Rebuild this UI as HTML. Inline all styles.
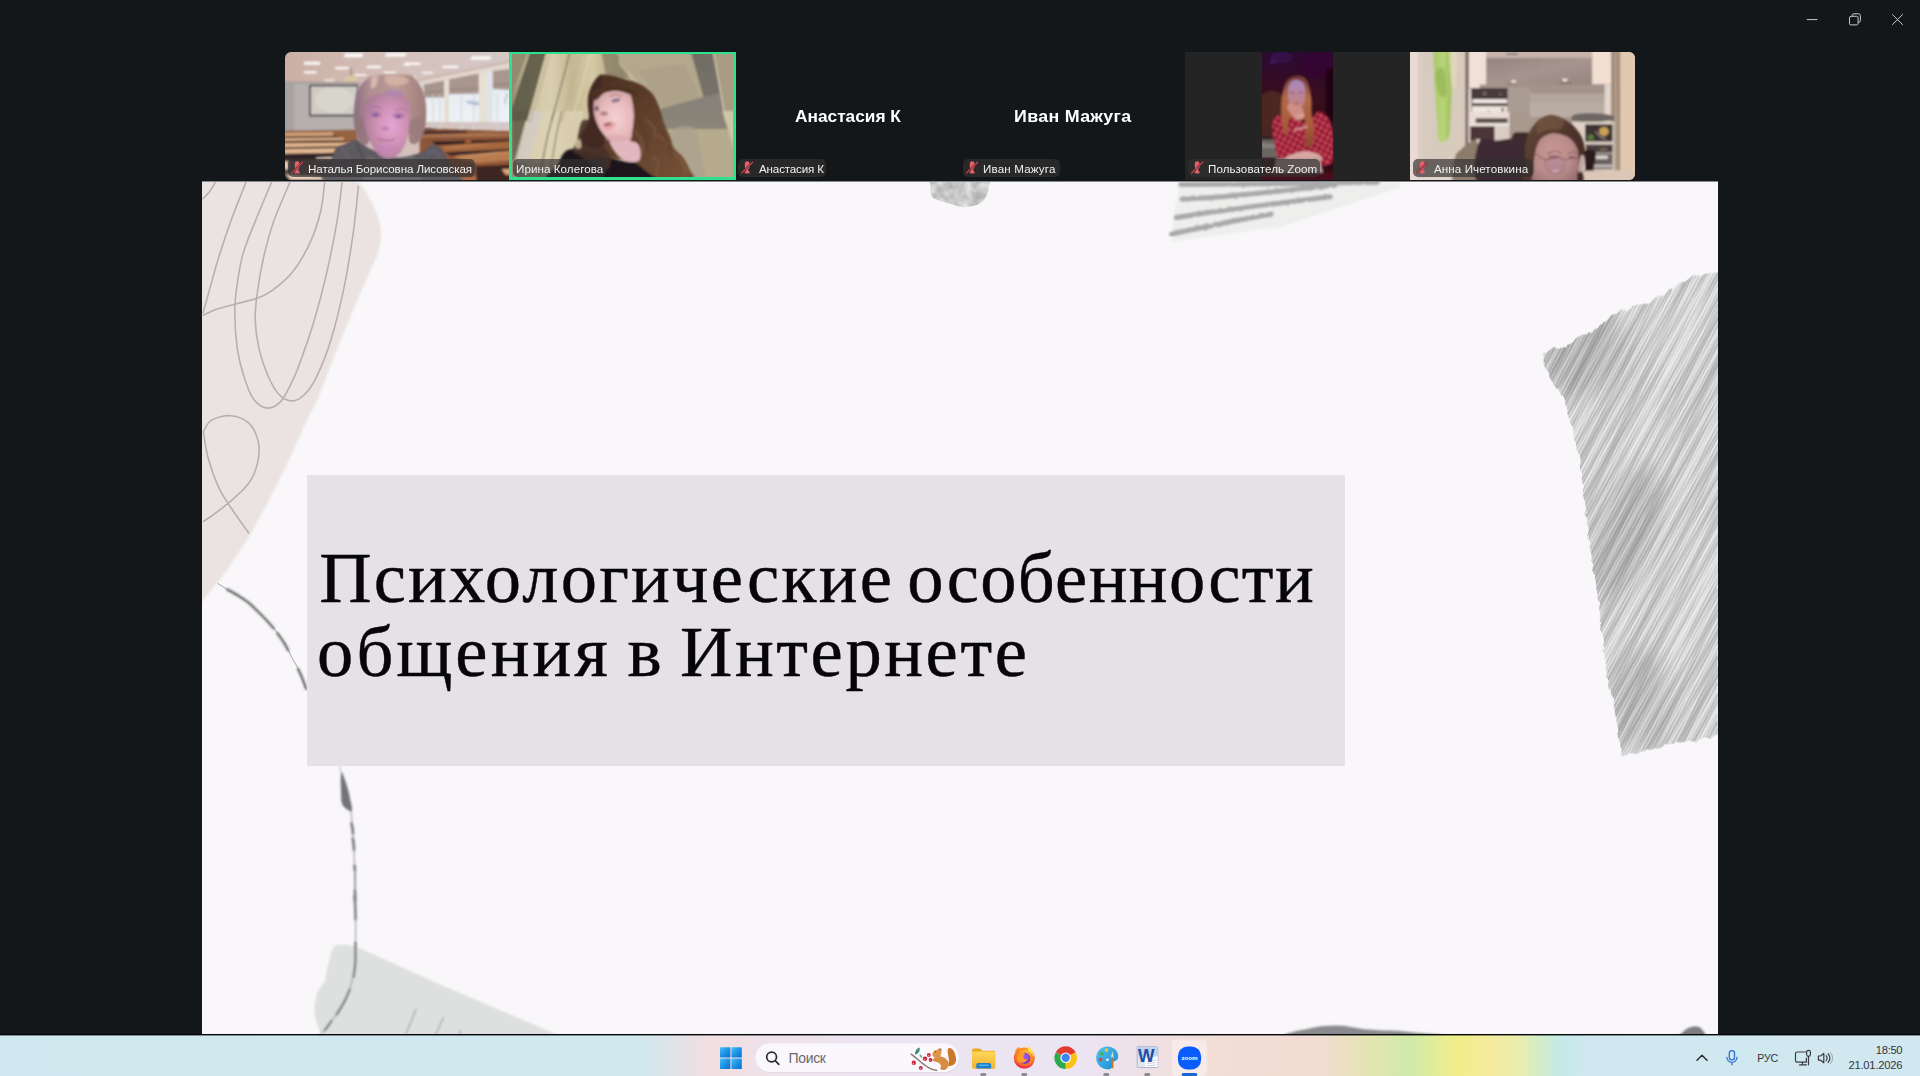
<!DOCTYPE html>
<html lang="ru">
<head>
<meta charset="utf-8">
<title>Zoom</title>
<style>
*{box-sizing:border-box;margin:0;padding:0}
html,body{width:1920px;height:1076px;overflow:hidden;background:#13171a}
body{position:relative;font-family:"Liberation Sans","DejaVu Sans",sans-serif;color:#fff}
.t{position:absolute;white-space:nowrap}
svg{display:block}
/* window controls */
#winctl{position:absolute;left:1780px;top:0;width:140px;height:40px}
/* gallery strip */
.tile{position:absolute;top:52px;width:225px;height:128px;overflow:hidden;background:#13171a}
.tile svg.pic{position:absolute;left:0;top:0;width:225px;height:128px}
.pw{position:absolute;overflow:hidden}
.tag{position:absolute;top:106.8px;height:18px;border-radius:5px;background:rgba(50,48,49,.68)}
.tag svg{position:absolute;left:2.6px;top:2.5px;width:12.6px;height:12.8px}
/* slide */
#slide{position:absolute;left:202px;top:181.5px;width:1515.5px;height:852.5px;background:#f9f7f9;overflow:hidden;box-shadow:0 -1px 0 rgba(249,247,249,.5)}
#slide>svg.deco{position:absolute;left:-12px;top:-12px;width:1539.5px;height:876.5px}
#titlebox{position:absolute;left:105px;top:293.5px;width:1037.5px;height:290.6px;background:#e5e1e6}
/* taskbar */
#sep{position:absolute;left:0;top:1034px;width:1920px;height:1.45px;background:#05060a;z-index:3;box-shadow:0 1px 0 rgba(5,6,10,.42)}
#taskbar{position:absolute;left:0;top:1035px;width:1920px;height:41px;
  background:linear-gradient(90deg,#cfe8ef 0px,#d0e8ee 640px,#e4e2e6 680px,#f1dfe1 705px,#efe2ea 780px,#ece4f0 860px,#ebe4f2 1080px,#efe0e4 1150px,#f2ddd7 1210px,#f1dcd3 1320px,#ebe1bd 1350px,#dfe7ae 1380px,#cfe9aa 1410px,#e2ec98 1435px,#f1ee8a 1457px,#f5eb9c 1490px,#e9edb0 1520px,#d3ecc8 1540px,#c4eae8 1560px,#cfe8ef 1585px,#d2e8f1 1920px)}

.tile .t{will-change:transform}

</style>
</head>
<body>
<svg id="winctl" viewBox="1780 0 140 40" fill="none" stroke="#c9cbcc" stroke-width="1">
<path d="M1806.8 19.6h10.6"/>
<path d="M1852 16.2v-0.4a2 2 0 0 1 2-2h4.4a2 2 0 0 1 2 2v4.6a2 2 0 0 1 -2 2h-0.4" stroke-width="1"/>
<rect x="1849.5" y="16.3" width="8.6" height="8.6" rx="1.6"/>
<path d="M1892.2 14.3l10.6 10.6M1902.8 14.3l-10.6 10.6"/>
</svg>
<svg width="0" height="0" style="position:absolute"><defs>
<symbol id="mute" viewBox="0 0 13 13">
<path d="M3.900 2.700a2.500 2.500 0 0 1 5 0v3.200a2.500 2.500 0 0 1 -1.600 2.350l.5 1.950l1.100.9v1.600h-5v-1.600l1.100-.9l.5-1.950a2.500 2.500 0 0 1 -1.600-2.350z" fill="#e6606b"/>
<path d="M.500 12.400L12.500 .700" stroke="#7c2027" stroke-width="2" stroke-linecap="round" fill="none"/>
<path d="M.500 12.400L12.500 .700" stroke="#d67683" stroke-width=".85" stroke-linecap="round" fill="none"/>
</symbol>
</defs></svg>
<!-- tile 1 -->
<div class="tile" style="left:285px;border-radius:6px 0 0 6px">
<svg class="pic" style="left:-8px;top:-8px;width:241px;height:144px" viewBox="277 44 241 144"><defs><linearGradient id="p1ceil" x1="0" y1="0" x2="1" y2="0"><stop offset="0" stop-color="#cbaea3"/><stop offset=".45" stop-color="#d3bfb8"/><stop offset="1" stop-color="#d6c9c8"/></linearGradient><linearGradient id="p1win" x1="0" y1="0" x2="0" y2="1"><stop offset="0" stop-color="#dfe6ee"/><stop offset="1" stop-color="#eef2f6"/></linearGradient><radialGradient id="p1face" cx=".6" cy=".5" r=".62"><stop offset="0" stop-color="#e6a4d6"/><stop offset=".45" stop-color="#d294b8"/><stop offset="1" stop-color="#ab7c98"/></radialGradient><linearGradient id="p1hair" x1="0" y1="0" x2="1" y2="0"><stop offset="0" stop-color="#8a6c80"/><stop offset=".22" stop-color="#b08e92"/><stop offset=".6" stop-color="#bd9a94"/><stop offset="1" stop-color="#9c7c7a"/></linearGradient><filter id="p1b" x="-5%" y="-5%" width="110%" height="110%"><feGaussianBlur stdDeviation=".8"/></filter><filter id="p1p" x="-5%" y="-5%" width="110%" height="110%"><feGaussianBlur stdDeviation=".8"/></filter><filter id="p1b2" x="-20%" y="-20%" width="140%" height="140%"><feGaussianBlur stdDeviation="1.1"/></filter></defs>
<rect x="275" y="42" width="245" height="148" fill="url(#p1ceil)"/>
<g filter="url(#p1b)">
<path d="M302.6 52L303.5 81.3" fill="none" stroke="#bba59d" stroke-width="0.5" opacity="0.5"/>
<path d="M324 52L313.6 81.3" fill="none" stroke="#bba59d" stroke-width="0.5" opacity="0.5"/>
<path d="M344.8 52L330.5 71.5" fill="none" stroke="#bba59d" stroke-width="0.5" opacity="0.5"/>
<path d="M365.7 52L350 68.3" fill="none" stroke="#bba59d" stroke-width="0.5" opacity="0.5"/>
<path d="M386.5 52L366.3 73.5" fill="none" stroke="#bba59d" stroke-width="0.5" opacity="0.5"/>
<path d="M345.5 53.6L363.7 53.6L361.7 57.2L343.5 57.2z" fill="#fdfbfa" opacity="1"/>
<path d="M386.5 53.3L407 53.3L405 56.6L384.5 56.6z" fill="#fdfbfa" opacity="1"/>
<path d="M303.9 61.8L320.1 61.8L320.1 64.7L303.9 64.7z" fill="#fdfbfa" opacity="1"/>
<path d="M335.7 67L349.4 67L348.4 69.2L334.8 69.2z" fill="#fdfbfa" opacity="1"/>
<path d="M367.9 65.7L381.9 65.7L380 68.3L366 68.3z" fill="#fdfbfa" opacity="1"/>
<path d="M405.3 63.7L410.5 63.7L408.6 65.7L403.4 65.7z" fill="#fdfbfa" opacity="1"/>
<path d="M303.9 71.2L316.5 71.2L316.5 73.5L303.9 73.5z" fill="#fdfbfa" opacity="1"/>
<path d="M354.9 74.1L366.3 74.1L365.7 75.7L354.3 75.7z" fill="#fdfbfa" opacity="1"/>
<path d="M384.5 71.8L396.2 71.8L395.6 73.8L383.9 73.8z" fill="#fdfbfa" opacity="1"/>
<path d="M325 79.6L334.8 79.6L334.4 80.9L324.7 80.9z" fill="#fdfbfa" opacity="0.85"/>
<path d="M471.7 56.2L491.3 56.2L490 59.8L470.4 59.8z" fill="#fdfbfa" opacity="0.95"/>
<path d="M404.8 62.4L421 62.4L419.7 65L403.5 65z" fill="#fdfbfa" opacity="0.95"/>
<path d="M443.1 65.7L458.7 65.7L457.4 67.9L441.8 67.9z" fill="#fdfbfa" opacity="0.95"/>
<path d="M422.6 71.8L433.4 71.8L432.7 73.8L422 73.8z" fill="#fdfbfa" opacity="0.9"/>
<path d="M406.7 76.7L416.5 76.7L415.8 78L406.1 78z" fill="#fdfbfa" opacity="0.85"/>
<path d="M350 67.6L351.3 71.5L350.7 76.1" fill="none" stroke="#6a5a4a" stroke-width="0.8"/>
<path d="M345.5 78C346.4 77.1 348.8 75.8 350.7 75.7C352.5 75.7 355.5 76.9 356.5 77.7C357.6 78.5 358.7 80.1 356.9 80.6C355 81.2 347.4 81.4 345.5 80.9C343.6 80.5 344.6 78.9 345.5 78z" fill="#d8caa0"/>
<path d="M278.5 82.6L359.8 82.6L359.8 133.3L278.5 133.3z" fill="#b5afae"/>
<path d="M278.5 82.6L294.1 82.6L294.1 133.3L278.5 133.3z" fill="#a6a2a4"/>
<path d="M278.5 81.6L359.8 82L359.8 83.2L278.5 83.2z" fill="#a89a96"/>
<rect x="309.4" y="84.8" width="48.5" height="31.5" fill="#2c282b"/>
<rect x="310.9" y="86.3" width="46" height="28.4" fill="#cfcbc4"/>
<ellipse cx="334.4" cy="100.1" rx="19.5" ry="13" fill="#dcd8d2" opacity="0.7"/>
<path d="M414.5 82.6L518.6 60.5L518.6 122L414.5 122z" fill="url(#p1win)"/>
<path d="M414.5 80.6L518.6 58.8L518.6 69.6L423 84.5L414.5 85.8z" fill="#e2d6cd"/>
<path d="M414.5 80L518.6 58.2L518.6 60.8L414.5 82.4z" fill="#cdb8b0"/>
<path d="M409.3 82.6L416.5 82.6L416.5 91L411.3 88.4z" fill="#2a1e1c"/>
<path d="M423.6 84.5L444.1 80.6L444.1 97.5L423.6 97.5z" fill="#a7948e"/>
<path d="M449 79.3L478.9 73.5L478.9 93.6L449 94.3z" fill="#a8958f"/>
<path d="M492.6 70.9L518.6 67.9L518.6 90.4L492.6 89.1z" fill="#a9968f"/>
<path d="M423.6 92.7L444.1 91" fill="none" stroke="#8c7870" stroke-width="0.9"/>
<path d="M449 89.7L478.9 88.4" fill="none" stroke="#8c7870" stroke-width="0.9"/>
<path d="M492.6 84.5L518.6 84.2" fill="none" stroke="#8c7870" stroke-width="0.9"/>
<path d="M444.1 80.6L449 79.6L449 122L444.1 122z" fill="#e6ded2"/>
<path d="M478.9 72.8L487.4 71.2L487.4 122L478.9 122z" fill="#e7e0d4"/>
<path d="M487.4 71.2L492.6 70.5L492.6 122L487.4 122z" fill="#dfe2ea"/>
<path d="M416.5 83.2L423.6 82.6L423.6 122L416.5 122z" fill="#d9d4d6"/>
<rect x="432.7" y="94.3" width="1.4" height="48.8" fill="#d3d6da" opacity="0.8"/>
<rect x="439.2" y="94.3" width="1.4" height="48.8" fill="#d3d6da" opacity="0.8"/>
<rect x="460.7" y="94.3" width="1.4" height="48.8" fill="#d3d6da" opacity="0.8"/>
<rect x="473" y="94.3" width="1.4" height="48.8" fill="#d3d6da" opacity="0.8"/>
<rect x="496.5" y="94.3" width="1.4" height="48.8" fill="#d3d6da" opacity="0.8"/>
<path d="M465.9 101.4C466.2 100.9 469.7 100.7 471.7 100.8C473.8 100.9 477.2 101.3 478.3 102.1C479.3 102.8 479.7 105 478.3 105.3C476.8 105.7 471.9 104.7 469.8 104C467.7 103.4 465.6 102 465.9 101.4z" fill="#a9b4d0" opacity="0.8"/>
<path d="M507.5 93.6L505.6 98.8L504.9 104" fill="none" stroke="#5a5a62" stroke-width="0.7" opacity="0.7"/>
<path d="M278.5 130.9L357.8 129.6L357.8 182L278.5 182z" fill="#96643f"/>
<path d="M278.5 133.1L333.1 132.3L333.1 136.2L278.5 136.7z" fill="#d2a27a"/>
<path d="M278.5 136.5L334.4 135.7L343.5 137.5L278.5 138.5z" fill="#3e2c26"/>
<path d="M278.5 138.4L343.5 137.6L343.5 140.6L278.5 141.4z" fill="#dfb088"/>
<path d="M278.5 141.1L340.9 140.2L350 142.3L278.5 143.5z" fill="#3c2a24"/>
<path d="M278.5 143.3L350 142.4L350 146.9L278.5 147.5z" fill="#e2b68e"/>
<path d="M278.5 147.3L337 146.2L337 148.4L278.5 149.6z" fill="#46322a"/>
<path d="M278.5 149.3L336.4 148.2L336.4 153.4L278.5 154.1z" fill="#e4ba94"/>
<path d="M278.5 153.9L335.7 152.8L335.7 160.8L278.5 160.8z" fill="#2e2426"/>
<path d="M316.2 157.4L333.1 156.7L333.1 159.2L316.2 159.6z" fill="#d2bcb0"/>
<path d="M278.5 160.5L334.4 160.5L334.4 183.5L278.5 183.5z" fill="#5a4a46"/>
<path d="M278.5 161.4L288.3 161.4L288.3 169.2L278.5 169.2z" fill="#eccdb2"/>
<path d="M286.3 174.6L326.6 176.9L326.6 179.6L290.9 179.6z" fill="#f4dcc2"/>
<path d="M419.7 128.3L518.6 131.5L518.6 182L419.7 182z" fill="#8e5638"/>
<path d="M423 128.6L434.7 128.4L434.7 129.9L423 130.1z" fill="#4a3a3c"/>
<path d="M420.4 131.5L466.5 130.7L467.2 132.7L420.4 134.4z" fill="#3a2a2c"/>
<path d="M421 134.8L488.7 132.8L518.6 134.4L518.6 136.7L422.3 137.7z" fill="#a87250"/>
<path d="M423 137.7L518.6 136.2L518.6 140.6L428.8 141.6z" fill="#8a5238"/>
<path d="M431.4 141.6L518.6 139.3L518.6 140.6L471.1 143.2L436.6 145.8z" fill="#2e2224"/>
<path d="M465.2 140L471.1 139.6L471.1 143.2L465.2 143.5z" fill="#a45a34"/>
<path d="M437.3 145.8L518.6 140.9L518.6 148.4L444.4 152.3z" fill="#a6663e"/>
<path d="M440.5 147.1L479.6 144.5L492.6 144.8L453.5 148.4z" fill="#c08a62" opacity="0.7"/>
<path d="M444.4 152.3L518.6 148.4L518.6 151L451.6 156.2z" fill="#3a2a26"/>
<path d="M451.6 156.2L518.6 150L518.6 160.1L475.7 163.4z" fill="#b87a50"/>
<path d="M453.5 156.2L499.1 151.7L518.6 152.3L466.5 157.5z" fill="#cf9468" opacity="0.7"/>
<path d="M475.7 163.4L518.6 160.1L518.6 182L476.3 182z" fill="#3c2820"/>
<path d="M476.3 163.4L518.6 160.5L518.6 164L477 166z" fill="#9a5a38"/>
<path d="M501.7 169.2L518.6 168.6L518.6 174.4L505.6 174.8z" fill="#dca67e"/>
<path d="M453.5 177L476.3 177L476.3 182L453.5 182z" fill="#b06a44"/>
</g>
<g filter="url(#p1p)">
<path d="M381.3 74.8C388 74.2 402.8 73.9 408.6 74.8C414.3 75.6 413.2 77 415.7 80C418.2 82.9 421.8 87.7 423.5 92.3C425.3 97 425.8 102.7 426.1 107.9C426.5 113.1 426.2 119.2 425.5 123.5C424.7 127.9 423.2 131.3 421.6 134C420 136.6 417.9 139.3 415.7 139.2C413.6 139 416.3 134.3 408.6 133.3C400.9 132.3 377.1 132.2 369.6 133.3C362 134.4 365.1 139.5 363 139.8C361 140.1 358.7 138.2 357.2 135.3C355.7 132.3 354.4 127.4 353.9 122.2C353.5 117 353.8 109.7 354.6 104C355.4 98.4 356.2 92.8 358.5 88.4C360.8 84.1 364.5 80.3 368.3 78C372 75.7 374.5 75.3 381.3 74.8z" fill="url(#p1hair)"/>
<path d="M371.5 78C372.6 76.1 377.2 75.4 378 76.7C378.8 78 377.1 83.9 376.1 85.8C375 87.8 372.3 89.7 371.5 88.4C370.7 87.1 370.4 80 371.5 78z" fill="#dcc0b4" opacity="0.8"/>
<path d="M386.5 76.1C389.3 75 399.7 75.6 403.4 76.7C407.1 77.8 409.9 81.1 408.6 82.6C407.3 84.1 399.3 85.7 395.6 85.8C391.9 85.9 388 84.8 386.5 83.2C384.9 81.6 383.6 77.1 386.5 76.1z" fill="#d6b8a8" opacity="0.8"/>
<path d="M330.5 182.9C310.1 179.3 331 167.2 331.8 161.4C332.7 155.7 333.8 151.2 335.7 148.4C337.7 145.6 340.1 145.9 343.5 144.5C347 143.1 352.2 139.3 356.5 140C360.9 140.6 363 145.5 369.6 148.4C376.1 151.3 386.9 156.9 395.6 157.5C404.2 158.2 415.5 154.5 421.6 152.3C427.7 150.2 428.7 145.2 432 144.5C435.2 143.9 438.7 146.3 441.1 148.4C443.5 150.6 444.6 153.8 446.3 157.5C448 161.2 450.2 166.3 451.5 170.5C452.8 174.8 474.3 180.8 454.1 182.9C433.9 185 350.9 186.5 330.5 182.9z" fill="#5d5a60"/>
<path d="M366.3 157.5C369 153.7 376.6 159.7 382.6 160.1C388.5 160.6 396.7 160.6 402.1 160.1C407.5 159.7 412.4 153.7 415.1 157.5C417.8 161.3 426.5 178.7 418.3 182.9C410.2 187.1 375 187.1 366.3 182.9C357.6 178.7 363.6 161.3 366.3 157.5z" fill="#6a666a"/>
<path d="M340.9 148.4C341.8 149.3 344.6 151 346.1 153.6C347.7 156.2 349.4 162.3 350 164" fill="none" stroke="#737083" stroke-width="1.7" opacity="0.55"/>
<path d="M426.8 153.6C428.1 153.2 432.4 150.6 434.6 151C436.8 151.5 438.9 155.4 439.8 156.2" fill="none" stroke="#77748a" stroke-width="1.7" opacity="0.55"/>
<path d="M356.5 142.6C357.2 144.2 358.9 149.2 360.4 152.3C362 155.5 364.8 159.9 365.7 161.4" fill="none" stroke="#3a363e" stroke-width="1.3" opacity="0.6"/>
<path d="M355.2 117C356.8 114.9 362.6 117 365 120.3C367.4 123.5 369.2 132.5 369.6 136.6C369.9 140.6 368.6 143.3 367 144.4C365.3 145.4 361.6 144.9 359.8 143.1C358 141.2 356.7 137.6 355.9 133.3C355.1 129 353.7 119.2 355.2 117z" fill="#94747c" opacity="0.9"/>
<path d="M410.5 120.3C413.2 117.6 422.7 114.8 424.8 117C427 119.3 424.7 129.6 423.5 134C422.3 138.3 419.9 141.5 417.7 143.1C415.5 144.6 412 144.7 410.5 143.1C409 141.4 408.6 137.1 408.6 133.3C408.6 129.5 407.8 123 410.5 120.3z" fill="#9a7a7c" opacity="0.9"/>
<path d="M379.3 93.6C383.9 92.8 391 92.8 395.6 93.6C400.1 94.5 404.2 96 406.6 98.8C409 101.6 409.4 105.9 409.9 110.5C410.3 115.2 409.9 121.6 409.2 126.8C408.6 132 407.6 137.3 406 141.8C404.3 146.2 402.3 150.6 399.5 153.5C396.7 156.3 392.5 158.4 389.1 158.7C385.6 158.9 381.7 157.4 378.7 154.8C375.6 152.2 373.1 147.7 370.9 143.1C368.6 138.4 366.2 132.2 365 126.8C363.8 121.4 363.2 115.2 363.7 110.5C364.2 105.9 365.7 101.6 368.3 98.8C370.9 96 374.8 94.5 379.3 93.6z" fill="url(#p1face)"/>
<path d="M385.8 89.7C388 89.1 399.6 89.9 402.1 91C404.6 92.1 402.9 95.6 400.8 96.2C398.6 96.9 391.6 96 389.1 94.9C386.6 93.8 383.6 90.4 385.8 89.7z" fill="#a884b8" opacity="0.6"/>
<path d="M369.6 107.9C370.6 107.7 373.9 106.1 376.1 106.3C378.2 106.5 381.5 108.7 382.6 109.2" fill="none" stroke="#9a5a90" stroke-width="0.9" opacity="0.8"/>
<path d="M394.9 110.5C396 110.3 399.4 108.9 401.4 108.9C403.5 108.9 406.3 110.3 407.3 110.5" fill="none" stroke="#9a5a90" stroke-width="0.9" opacity="0.8"/>
<ellipse cx="375.7" cy="115" rx="2.7" ry="1.6" fill="#5e3e86"/>
<ellipse cx="398.5" cy="116.3" rx="2.6" ry="1.6" fill="#5e3e86"/>
<ellipse cx="375.7" cy="114.4" rx="6.2" ry="3.1" fill="#9a6aa8" opacity="0.5"/>
<ellipse cx="398.5" cy="115.7" rx="6.2" ry="3.1" fill="#9a6aa8" opacity="0.5"/>
<ellipse cx="385.5" cy="128.6" rx="3.9" ry="2" fill="#b870a8" opacity="0.6"/>
<path d="M377.4 138.7C378.8 139 382.9 140.6 385.8 140.6C388.7 140.7 393.4 139.3 394.9 139" fill="none" stroke="#a25a94" stroke-width="1.2" opacity="0.85"/>
<ellipse cx="386.5" cy="148.4" rx="11.7" ry="3.9" fill="#c884bc" opacity="0.5"/>
</g></svg>
<div class="tag" style="left:3.2px;width:187px"><svg><use href="#mute"/></svg></div>
<div class="t" style="left:22.80px;top:109.23px;height:15px;line-height:15px;font-family:'Liberation Sans','DejaVu Sans',sans-serif;font-size:11.6px;letter-spacing:-0.09px;color:#f0f0f0;">Наталья Борисовна Лисовская</div>
</div>
<!-- tile 2 (active speaker) -->
<div class="tile" style="left:509px;width:227px;background:#2fe08c">
<div class="pw" style="left:3px;top:2px;width:221px;height:123px"><svg class="pic" style="left:-8px;top:-8px;width:237px;height:139.500px" viewBox="504 46 237 139.500"><defs><linearGradient id="p2cur" x1="0" y1="0" x2="1" y2="0"><stop offset="0" stop-color="#9a8f74"/><stop offset=".12" stop-color="#6f6a55"/><stop offset=".25" stop-color="#8d846a"/><stop offset=".36" stop-color="#cfc3a4"/><stop offset=".5" stop-color="#d9cfae"/><stop offset=".62" stop-color="#c4b794"/><stop offset=".75" stop-color="#d6caa6"/><stop offset=".9" stop-color="#a89c7c"/><stop offset="1" stop-color="#8a8066"/></linearGradient><radialGradient id="p2face" cx=".55" cy=".55" r=".65"><stop offset="0" stop-color="#f4d0d2"/><stop offset=".6" stop-color="#e6b8ba"/><stop offset="1" stop-color="#c79a9a"/></radialGradient><linearGradient id="p2hair" x1="0" y1="0" x2="1" y2="1"><stop offset="0" stop-color="#452c20"/><stop offset=".5" stop-color="#5f3f2b"/><stop offset="1" stop-color="#775236"/></linearGradient><linearGradient id="p2wall" x1="0" y1="0" x2="0" y2="1"><stop offset="0" stop-color="#7a756a"/><stop offset=".5" stop-color="#84807a"/><stop offset="1" stop-color="#8c8678"/></linearGradient><filter id="p2b" x="-5%" y="-5%" width="110%" height="110%"><feGaussianBlur stdDeviation=".8"/></filter><filter id="p2b2" x="-20%" y="-20%" width="140%" height="140%"><feGaussianBlur stdDeviation="2.2"/></filter></defs>
<rect x="500" y="42" width="245" height="148" fill="#b7ab8e"/>
<g filter="url(#p2b)">
<path d="M509 44.5L634.5 44.5L593.6 187.6L468 187.6z" fill="url(#p2cur)"/>
<path d="M528.5 111L583.8 111L574 163L515.5 163z" fill="#ddd3b6" opacity="0.75"/>
<path d="M530.5 111L542.8 111L528.5 163L514.9 163z" fill="#d2cac6" opacity="0.8"/>
<path d="M512.3 111L528.5 111L514.2 160.4L512.3 160.4z" fill="#6c6752"/>
<path d="M531.8 45.8L548 45.8L527.2 121L511.6 121L511.6 109.5z" fill="#5c5946" opacity="0.92"/>
<path d="M502.5 45.8L531.1 45.8L502.5 116z" fill="#948a70"/>
<path d="M570.8 47.7C569.2 54.1 564.3 73.9 561 86.1C557.8 98.3 552.9 115.2 551.3 121" fill="none" stroke="#4e4a3a" stroke-width="0.9"/>
<path d="M554.5 111C553.3 115.3 549.9 126 547.4 137C544.9 148.1 540.9 170.6 539.6 177.3" fill="none" stroke="#4a4636" stroke-width="1"/>
<path d="M561.7 111C560.7 115.6 557.9 127.3 555.8 138.3C553.8 149.4 550.4 170.8 549.3 177.3" fill="none" stroke="#565240" stroke-width="0.9" opacity="0.95"/>
<path d="M580.5 54.3C578.9 60.2 574 78.6 570.8 90C567.5 101.4 562.7 117.1 561 122.5" fill="none" stroke="#bdb08c" stroke-width="2.6" opacity="0.55"/>
<path d="M590.3 54.3C588.7 60.2 583.8 78.6 580.5 90C577.3 101.4 572.4 117.1 570.8 122.5" fill="none" stroke="#e0d6b4" stroke-width="2.6" opacity="0.55"/>
<path d="M549.3 54.3C547.7 60.2 542.8 78.6 539.6 90C536.3 101.4 531.4 117.1 529.8 122.5" fill="none" stroke="#b9ad90" stroke-width="2.6" opacity="0.55"/>
<path d="M600.1 45.8L629 45.8L629 78.3L606.6 78.3z" fill="#8e846a" opacity="0.85"/>
<path d="M616.4 45.8L742.6 45.8L742.6 129L660.6 129L638.5 83.5L616.4 55.6z" fill="url(#p2wall)"/>
<path d="M616.4 45.8L689.2 45.8L703.6 96.9L661.9 108.2L638.5 81.6L616.4 54.3z" fill="#b3a78c"/>
<path d="M638.5 70.5L684 64L700.3 96.5L663.2 106.9z" fill="#a89d88" opacity="0.6"/>
<path d="M619 57.2L638.5 81.6L661.9 108.2L660.6 110.8L635.3 84.8L619 64z" fill="#cbbf9f" opacity="0.7"/>
<path d="M689.2 45.8L712 45.8L720.5 92.6L703.6 96.9z" fill="#6e6a60" opacity="0.7"/>
<path d="M712 45.8L742.6 45.8L742.6 116L725.7 121z" fill="#a99c82"/>
<path d="M712.1 45.8C713.4 52.7 717.6 74.9 719.8 87.4C722.1 100 724.7 115.4 725.7 121" fill="none" stroke="#e6dcc4" stroke-width="1"/>
<path d="M722.4 111L742.6 111L742.6 176z" fill="#cfc6a6"/>
<path d="M672.3 130.5C675.3 125.7 689.1 124.7 693.8 127.9C698.5 131.2 698.7 141.8 700.3 150C701.9 158.3 706.3 172.8 703.6 177.3C700.8 181.9 688.6 180.8 684 177.3C679.5 173.9 678.2 164.3 676.2 156.5C674.3 148.7 669.4 135.3 672.3 130.5z" fill="#a9a08e" opacity="0.7"/>
</g>
<g filter="url(#p2b)">
<path d="M554.5 182.5C533.5 179.5 556.8 169.3 558.4 164.3C560.1 159.3 561.7 155.2 564.3 152.6C566.9 150.1 569.2 149 574 149C578.9 149 586 150.7 593.6 152.6C601.1 154.5 610.9 158.7 619.6 160.4C628.2 162.2 636.9 161.5 645.6 163C654.3 164.6 665.1 166.3 671.6 169.5C678.1 172.8 704.1 180.4 684.6 182.5C665.1 184.7 575.6 185.6 554.5 182.5z" fill="#1b191b"/>
<path d="M601.4 74.7C604.3 73.8 609.4 75.3 613.1 76C616.8 76.7 619.2 77.7 623.5 79C627.7 80.2 633.8 81.2 638.4 83.5C643.1 85.8 648.1 88.9 651.4 92.6C654.8 96.3 656.5 100.6 658.6 105.6C660.7 110.6 661.8 117.2 663.8 122.5C665.7 127.9 668.6 133.2 670.3 137.5C672 141.8 672 145.2 674.2 148.6C676.4 151.9 680.7 154.1 683.3 157.7C685.9 161.2 688.4 166.6 689.8 170C691.2 173.5 697 177.1 691.8 178.5C686.6 179.9 668.5 181.3 658.6 178.5C648.7 175.7 641.2 165 632.6 161.6C623.9 158.1 614.4 159.2 606.6 157.7C598.8 156.1 591.2 153.3 585.7 152.5C580.3 151.6 575.6 154 574 152.5C572.5 150.9 575 146 576.6 143.4C578.3 140.8 581.7 140.3 583.8 136.9C585.9 133.4 588.3 128.2 589 122.5C589.7 116.9 587.9 108.2 588 103C588.1 97.8 588.4 94.9 589.7 91.3C590.9 87.7 593.6 84.3 595.5 81.6C597.5 78.8 598.4 75.7 601.4 74.7z" fill="url(#p2hair)"/>
<path d="M582.5 120.8C585.2 118.3 590.4 120.2 593.6 124C596.7 127.8 598.5 138.1 601.4 143.5C604.2 148.9 609.6 152.2 610.5 156.5C611.3 160.9 610.5 168.9 606.6 169.5C602.7 170.2 592.5 163.7 587 160.4C581.6 157.2 575.7 153.6 574 150C572.4 146.4 575.9 143.8 577.3 139C578.7 134.1 579.8 123.2 582.5 120.8z" fill="#46302a" opacity="0.9"/>
<path d="M574.7 141.6C575.3 140.2 578.8 138.6 579.9 139.6C581 140.6 581.8 146 581.2 147.4C580.5 148.8 577.1 149 576 148.1C574.9 147.1 574 143 574.7 141.6z" fill="#d8cba8" opacity="0.8"/>
<path d="M601.4 74.7C600.1 73.4 595.6 79.2 593.6 82.2C591.5 85.2 590 88.9 589 92.6C588 96.3 587.7 100.4 587.7 104.3C587.7 108.2 589.3 112.1 589 116C588.7 119.9 587.2 124.5 585.7 127.7C584.3 131 580.9 133 580.5 135.6C580.2 138.2 581.4 141.2 583.8 143.4C586.2 145.5 591.3 148.8 594.9 148.6C598.4 148.3 604.4 146.4 605.3 142.1C606.1 137.7 601.6 129 600.1 122.5C598.5 116 595.9 108.5 596.2 103C596.4 97.6 600.5 94.7 601.4 90C602.2 85.3 602.7 76 601.4 74.7z" fill="#422a20"/>
<path d="M606.6 89.4C609.8 88.7 615.8 87.5 619.6 88.1C623.4 88.6 627.2 90.1 629.3 92.6C631.5 95.1 631.8 99.1 632.6 103C633.3 106.9 633.9 111.7 633.9 116C633.9 120.4 633.2 124.9 632.6 129C631.9 133.2 632.1 138.4 630 140.8C627.8 143.1 622.8 143.4 619.6 143.4C616.3 143.4 613.4 142.6 610.5 140.8C607.5 138.9 604.4 135.6 602 132.3C599.6 129 597.6 125 596.2 121.2C594.7 117.4 593.8 113.4 593.6 109.5C593.3 105.6 593.8 100.8 594.9 97.8C595.9 94.9 598.1 93.4 600.1 92C602 90.6 603.3 90 606.6 89.4z" fill="url(#p2face)"/>
<path d="M610.5 139.6C613.3 137.8 627.7 140.3 632.6 141.6C637.5 142.9 638.6 144.3 639.7 147.4C640.8 150.6 641.4 158.2 639.1 160.4C636.8 162.7 630 162.4 626.1 161.1C622.2 159.8 618.3 156.2 615.7 152.6C613.1 149 607.6 141.5 610.5 139.6z" fill="#e3b7bf"/>
<path d="M591 92.6C591.9 90.5 597.1 88.5 601.4 87.4C605.6 86.3 611.1 85.7 616.3 86.1C621.5 86.6 629.2 88.3 632.6 90C635.9 91.8 638.6 96.3 636.5 96.5C634.3 96.7 624.8 92 619.6 91.3C614.4 90.7 609.3 91.1 605.3 92.6C601.2 94.1 597.9 100.4 595.5 100.4C593.1 100.4 590 94.8 591 92.6z" fill="#4e3224"/>
<path d="M635.3 130.5C636.5 132.7 641.3 139.2 642.4 143.5C643.5 147.9 641.9 154.4 641.8 156.5" fill="none" stroke="#96704a" stroke-width="1.3" opacity="0.55"/>
<path d="M658 135.7C659.1 136.4 662.8 138.1 664.5 139.6C666.3 141.1 667.8 144 668.4 144.8" fill="none" stroke="#96704a" stroke-width="1.3" opacity="0.55"/>
<path d="M652.8 156.5C653.7 157.6 657.6 159.8 658 163C658.5 166.3 655.9 173.9 655.4 176" fill="none" stroke="#96704a" stroke-width="1.3" opacity="0.55"/>
<path d="M671 151.3C672.7 152.8 678.2 156.7 680.8 160.4C683.4 164.1 685.7 171.3 686.6 173.4" fill="none" stroke="#96704a" stroke-width="1.3" opacity="0.55"/>
<path d="M646.3 118.8C647.6 120.3 652.6 124.7 654.1 127.9C655.6 131.2 655.2 136.6 655.4 138.3" fill="none" stroke="#96704a" stroke-width="1.3" opacity="0.55"/>
<path d="M638.5 120.8C639.8 123.2 644.9 130.4 646.3 135.7C647.7 141 646.9 149.8 647 152.6" fill="none" stroke="#4e3424" stroke-width="1.7" opacity="0.5"/>
<path d="M661.3 130.5C662.5 132.9 666.6 140.5 668.4 144.8C670.3 149.2 671.7 154.6 672.3 156.5" fill="none" stroke="#4e3424" stroke-width="1.7" opacity="0.5"/>
<ellipse cx="615.7" cy="100.4" rx="4.6" ry="1.8" transform="rotate(-12 615.7 100.4)" fill="#7a6684" opacity="0.9"/>
<ellipse cx="596.8" cy="108.6" rx="2.3" ry="2.6" fill="#6a5674" opacity="0.85"/>
<path d="M609.2 96.5C610.2 96.2 613.5 94.6 615.7 94.6C617.8 94.6 621.1 96.2 622.2 96.5" fill="none" stroke="#8a5a48" stroke-width="1" opacity="0.8"/>
<ellipse cx="604" cy="113.4" rx="3.9" ry="2" fill="#9a6a6a" opacity="0.75"/>
<path d="M602.7 123.4C603.6 122.1 608.3 121.3 610.5 121.4C612.6 121.5 615.7 122.6 615.7 124C615.7 125.4 612.3 129 610.5 129.9C608.6 130.7 605.9 130.3 604.6 129.2C603.3 128.1 601.7 124.7 602.7 123.4z" fill="#e7a7a6"/>
<ellipse cx="607.9" cy="124.3" rx="3.9" ry="1.4" transform="rotate(-10 607.9 124.3)" fill="#8a5058" opacity="0.85"/>
<ellipse cx="615.7" cy="138.3" rx="10.4" ry="3.9" fill="#d8a2a8" opacity="0.5"/>
</g></svg></div>
<div class="tag" style="left:4px;width:92.600px"></div>
<div class="t" style="left:6.90px;top:109.23px;height:15px;line-height:15px;font-family:'Liberation Sans','DejaVu Sans',sans-serif;font-size:11.6px;letter-spacing:0.07px;color:#f0f0f0;">Ирина Колегова</div>
</div>
<!-- tile 3 -->
<div class="tile" style="left:736px;width:224px">
<div class="tag" style="left:2.2px;width:88px"><svg><use href="#mute"/></svg></div>
<div class="t" style="left:22.50px;top:109.23px;height:15px;line-height:15px;font-family:'Liberation Sans','DejaVu Sans',sans-serif;font-size:11.6px;letter-spacing:-0.15px;color:#f0f0f0;">Анастасия К</div>
<div class="t" style="left:58.70px;top:53.98px;height:22px;line-height:22px;font-family:'Liberation Sans','DejaVu Sans',sans-serif;font-size:16.8px;font-weight:700;color:#fff;transform:scaleX(1.03);transform-origin:0 0;">Анастасия К</div>
</div>
<!-- tile 4 -->
<div class="tile" style="left:960px">
<div class="tag" style="left:3.3px;width:96.300px"><svg><use href="#mute"/></svg></div>
<div class="t" style="left:22.90px;top:109.23px;height:15px;line-height:15px;font-family:'Liberation Sans','DejaVu Sans',sans-serif;font-size:11.6px;letter-spacing:0.16px;color:#f0f0f0;">Иван Мажуга</div>
<div class="t" style="left:54.00px;top:53.98px;height:22px;line-height:22px;font-family:'Liberation Sans','DejaVu Sans',sans-serif;font-size:16.8px;font-weight:700;letter-spacing:0.3px;color:#fff;transform:scaleX(1.062);transform-origin:0 0;">Иван Мажуга</div>
</div>
<!-- tile 5 -->
<div class="tile" style="left:1185px;background:#242424">
<svg class="pic" style="left:-8px;top:-8px;width:241px;height:144px" viewBox="1177 44 241 144"><defs><linearGradient id="p5bg" x1="0" y1="0" x2="0" y2="1"><stop offset="0" stop-color="#290a36"/><stop offset=".18" stop-color="#300a2a"/><stop offset=".4" stop-color="#3a0e1c"/><stop offset=".8" stop-color="#2c0a12"/><stop offset="1" stop-color="#3a0c18"/></linearGradient><linearGradient id="p5hair" x1="0" y1="0" x2="0" y2="1"><stop offset="0" stop-color="#6e3a34"/><stop offset=".3" stop-color="#b06a48"/><stop offset=".7" stop-color="#a85c3c"/><stop offset="1" stop-color="#8a4430"/></linearGradient><linearGradient id="p5face" x1="0" y1="0" x2="0" y2="1"><stop offset="0" stop-color="#a888c0"/><stop offset=".45" stop-color="#b8849c"/><stop offset="1" stop-color="#c08478"/></linearGradient><pattern id="p5plaid" width="5.4" height="5.4" patternUnits="userSpaceOnUse" patternTransform="rotate(28)"><rect width="5.4" height="5.4" fill="#bd2438"/><rect width="5.4" height=".55" fill="#f4ccd0" opacity=".6"/><rect width=".55" height="5.4" fill="#f4ccd0" opacity=".6"/><rect y="2.700" width="5.4" height=".8" fill="#5a1038" opacity=".7"/><rect x="2.700" width=".8" height="5.4" fill="#5a1038" opacity=".7"/></pattern><filter id="p5b" x="-5%" y="-5%" width="110%" height="110%"><feGaussianBlur stdDeviation=".8"/></filter><clipPath id="p5c"><rect x="1262" y="42" width="71.200" height="148"/></clipPath></defs>
<g clip-path="url(#p5c)">
<rect x="1262" y="42" width="71.200" height="148" fill="url(#p5bg)"/>
<g filter="url(#p5b)">
<ellipse cx="1281.8" cy="57.4" rx="11" ry="6.1" fill="#3e1660" opacity="0.5"/>
<ellipse cx="1273.2" cy="61.6" rx="3.7" ry="3.1" fill="#4a2278" opacity="0.45"/>
<ellipse cx="1318.6" cy="64.7" rx="18.4" ry="13.5" fill="#3a0a3a" opacity="0.5"/>
<path d="M1260.9 96.6C1264.4 89.4 1277.9 88.8 1281.8 95.4C1285.7 101.9 1287.7 128.7 1284.2 135.8C1280.8 143 1264.8 144.8 1260.9 138.3C1257.1 131.8 1257.5 103.8 1260.9 96.6z" fill="#4e2a22" opacity="0.9"/>
<path d="M1325.9 68.4L1334.5 68.4L1334.5 123.6L1325.9 118.7z" fill="#1c060c" opacity="0.8"/>
<path d="M1260.9 138.9L1276.9 138.9L1279.3 157.9L1260.9 157.9z" fill="#6a6662"/>
<path d="M1260.9 143.2L1275.7 144.4L1275.7 148.1L1260.9 148.1z" fill="#8a8a86" opacity="0.8"/>
<path d="M1260.9 137.1L1274.4 137.3L1274.4 139.5L1260.9 139.5z" fill="#2a1a1a"/>
<path d="M1274.4 118.7C1276.6 116.2 1281.8 113.8 1285.5 113.8C1289.1 113.8 1292.6 117.2 1296.5 118.7C1300.4 120.1 1305.1 123.6 1308.8 122.4C1312.4 121.1 1315.3 111.9 1318.6 111.3C1321.8 110.7 1325.9 115 1328.4 118.7C1330.8 122.4 1332.4 127.3 1333.3 133.4C1334.2 139.5 1334.3 150.4 1333.9 155.5C1333.5 160.6 1333 162.4 1330.8 164C1328.7 165.7 1323.9 166.3 1321 165.3C1318.2 164.3 1317.8 159.3 1313.7 157.9C1309.6 156.5 1302.2 156.5 1296.5 156.7C1290.8 156.9 1283 161.4 1279.3 159.1C1275.7 156.9 1275.6 148.3 1274.4 143.2C1273.3 138.1 1272.6 132.6 1272.6 128.5C1272.6 124.4 1272.3 121.1 1274.4 118.7z" fill="url(#p5plaid)"/>
<path d="M1274.4 118.7C1276.6 116.2 1281.8 113.8 1285.5 113.8C1289.1 113.8 1292.6 117.2 1296.5 118.7C1300.4 120.1 1305.1 123.6 1308.8 122.4C1312.4 121.1 1315.3 111.9 1318.6 111.3C1321.8 110.7 1325.9 115 1328.4 118.7C1330.8 122.4 1332.4 127.3 1333.3 133.4C1334.2 139.5 1334.3 150.4 1333.9 155.5C1333.5 160.6 1333 162.4 1330.8 164C1328.7 165.7 1323.9 166.3 1321 165.3C1318.2 164.3 1317.8 159.3 1313.7 157.9C1309.6 156.5 1302.2 156.5 1296.5 156.7C1290.8 156.9 1283 161.4 1279.3 159.1C1275.7 156.9 1275.6 148.3 1274.4 143.2C1273.3 138.1 1272.6 132.6 1272.6 128.5C1272.6 124.4 1272.3 121.1 1274.4 118.7z" fill="#7a0a20" opacity="0.18"/>
<path d="M1286.7 156.7C1289.4 155.2 1298.5 151.6 1303.9 151.2C1309.2 150.8 1315.7 152.7 1318.6 154.2C1321.4 155.8 1323.5 159.3 1321 160.4C1318.6 161.4 1309.4 160.4 1303.9 160.4C1298.3 160.4 1290.8 161 1287.9 160.4C1285.1 159.8 1284 158.2 1286.7 156.7z" fill="#d9a7a2"/>
<path d="M1296.5 75.8C1299.6 75.8 1303.9 76 1306.3 79.4C1308.8 82.9 1310.3 90.9 1311.2 96.6C1312.1 102.3 1311.3 108 1311.8 113.8C1312.3 119.5 1314.4 125.4 1314.3 130.9C1314.2 136.5 1312.8 144.8 1311.2 146.9C1309.7 148.9 1306.3 147.9 1305.1 143.2C1303.9 138.5 1306.5 122.8 1303.9 118.7C1301.2 114.6 1291.8 115.8 1289.1 118.7C1286.5 121.5 1288.9 134.2 1287.9 135.8C1286.9 137.5 1284.1 133 1283 128.5C1281.9 124 1281.2 115.2 1281.2 108.9C1281.2 102.5 1281.9 95.4 1283 90.5C1284.1 85.6 1285.7 81.9 1287.9 79.4C1290.2 77 1293.4 75.8 1296.5 75.8z" fill="url(#p5hair)"/>
<path d="M1296.5 80C1298.6 80.2 1301.8 80.9 1303.2 82.9C1304.7 84.8 1305.2 88.5 1305.3 91.7C1305.5 94.9 1305.3 99.3 1304.4 102.1C1303.5 105 1301.8 107.9 1299.9 108.9C1298.1 109.8 1295 109.1 1293.1 107.9C1291.2 106.7 1289.5 104.5 1288.7 101.5C1287.8 98.5 1287.6 93.1 1287.9 89.9C1288.3 86.6 1289.4 83.8 1290.9 82.1C1292.3 80.5 1294.4 79.9 1296.5 80z" fill="url(#p5face)"/>
<path d="M1287.3 105.2C1288.3 103.5 1294 103.3 1296.5 104C1299.1 104.6 1301.4 106.4 1302.6 108.9C1303.9 111.3 1304.9 116.8 1303.9 118.7C1302.8 120.5 1298.8 120.7 1296.5 119.9C1294.3 119.1 1291.9 116.2 1290.4 113.8C1288.8 111.3 1286.3 106.8 1287.3 105.2z" fill="#cf8e84"/>
<path d="M1294.1 130.3L1307.5 126.6" fill="none" stroke="#f0c0c0" stroke-width="2" opacity="0.7"/>
<path d="M1296.5 116.2L1303.9 115" fill="none" stroke="#f0d0c8" stroke-width="1.2" opacity="0.7"/>
<path d="M1289.8 92.3L1293.4 92.9" fill="none" stroke="#6a3a50" stroke-width="1" opacity="0.8"/>
<path d="M1299 92.9L1302.6 92.3" fill="none" stroke="#6a3a50" stroke-width="1" opacity="0.8"/>
<path d="M1294.1 104L1299 103.7" fill="none" stroke="#8a4050" stroke-width="1" opacity="0.8"/>
</g>
<g filter="url(#p5b)">
<path d="M1275.7 158.5L1319.8 157.9L1323.5 173.2L1273.2 173.9z" fill="#b89c9c"/>
<path d="M1260.9 172.6L1334.5 172.6L1334.5 180L1260.9 180z" fill="#4a0e1c"/>
</g>
</g></svg>
<div class="tag" style="left:3.4px;width:131.300px"><svg><use href="#mute"/></svg></div>
<div class="t" style="left:22.80px;top:109.23px;height:15px;line-height:15px;font-family:'Liberation Sans','DejaVu Sans',sans-serif;font-size:11.6px;letter-spacing:0.07px;color:#f0f0f0;">Пользователь Zoom</div>
</div>
<!-- tile 6 -->
<div class="tile" style="left:1410px;border-radius:0 6px 6px 0">
<svg class="pic" style="left:-8px;top:-8px;width:241px;height:144px" viewBox="1402 44 241 144"><defs><linearGradient id="p6wall" x1="0" y1="0" x2="1" y2="0"><stop offset="0" stop-color="#d9c8c0"/><stop offset=".12" stop-color="#ecdcd4"/><stop offset=".3" stop-color="#dccfc4"/><stop offset=".42" stop-color="#d6cabb"/><stop offset="1" stop-color="#d9ccbe"/></linearGradient><linearGradient id="p6green" x1="0" y1="0" x2="1" y2="0"><stop offset="0" stop-color="#a9c86a"/><stop offset=".5" stop-color="#b9d578"/><stop offset=".8" stop-color="#a4c264"/><stop offset="1" stop-color="#c6cf98"/></linearGradient><linearGradient id="p6cab" x1="0" y1="0" x2="1" y2="1"><stop offset="0" stop-color="#93847f"/><stop offset=".5" stop-color="#a6958e"/><stop offset="1" stop-color="#95867f"/></linearGradient><radialGradient id="p6face" cx=".45" cy=".4" r=".7"><stop offset="0" stop-color="#c99a96"/><stop offset=".6" stop-color="#b88a88"/><stop offset="1" stop-color="#976c70"/></radialGradient><linearGradient id="p6hair" x1="0" y1="0" x2="1" y2="1"><stop offset="0" stop-color="#6a4c3a"/><stop offset=".45" stop-color="#50362c"/><stop offset="1" stop-color="#3c2424"/></linearGradient><filter id="p6b" x="-5%" y="-5%" width="110%" height="110%"><feGaussianBlur stdDeviation=".8"/></filter></defs>
<rect x="1400" y="42" width="245" height="148" fill="#a8978e"/>
<g filter="url(#p6b)">
<rect x="1403.5" y="45.5" width="65" height="136.6" fill="url(#p6wall)"/>
<rect x="1403.5" y="45.5" width="14.3" height="136.6" fill="#e9dad3"/>
<rect x="1417.8" y="45.5" width="15.6" height="136.6" fill="#d7cbc0" opacity="0.7"/>
<path d="M1434.7 46.8C1437.6 42.7 1448.6 41.6 1451.6 46.8C1454.7 52 1452.9 68.5 1452.9 78C1452.9 87.6 1452.1 96.4 1451.6 104C1451.2 111.6 1450.8 118.1 1450.3 123.5C1449.9 129 1450.1 133.5 1449 136.6C1447.9 139.6 1445.6 141.2 1443.8 141.8C1442.1 142.3 1439.7 142.8 1438.6 139.8C1437.5 136.8 1437.9 130.6 1437.3 123.5C1436.8 116.5 1435.9 106.2 1435.4 97.5C1434.8 88.9 1434.2 80 1434.1 71.5C1434 63.1 1431.8 50.9 1434.7 46.8z" fill="url(#p6green)"/>
<path d="M1436 71.5C1437.1 68.3 1442.1 65.7 1443.8 68.9C1445.6 72.2 1446.6 86.3 1446.4 91C1446.2 95.8 1444 98 1442.5 97.5C1441 97.1 1438.4 92.8 1437.3 88.4C1436.2 84.1 1434.9 74.8 1436 71.5z" fill="#93b552" opacity="0.7"/>
<path d="M1449 46.8C1449.7 40.5 1454.4 40.5 1455.5 46.8C1456.6 53.1 1456.2 78.2 1455.5 84.5C1454.9 90.8 1452.7 90.8 1451.6 84.5C1450.5 78.2 1448.4 53.1 1449 46.8z" fill="#e6dcc0" opacity="0.7"/>
<rect x="1465.3" y="45.5" width="3.6" height="136.6" fill="#7c6c66"/>
<rect x="1468.9" y="45.5" width="17.9" height="42.6" fill="#f1e0d8"/>
<rect x="1486.2" y="45.5" width="106" height="12.4" fill="#c9b4ac"/>
<rect x="1486.2" y="57.9" width="106" height="27" fill="url(#p6cab)"/>
<path d="M1538.2 57.9L1538.2 84.5" fill="none" stroke="#9a8680" stroke-width="0.7" opacity="0.7"/>
<rect x="1592.2" y="45.5" width="18.9" height="38.7" fill="#f2dfd2"/>
<rect x="1506.3" y="53.3" width="11.7" height="1.6" fill="#6a5a58" opacity="0.8"/>
<rect x="1506.3" y="83.2" width="11.1" height="2.3" rx="0.7" fill="#8a7670"/>
<ellipse cx="1513.7" cy="81.6" rx="2.6" ry="1.3" fill="#f4ece6"/>
<rect x="1560" y="81.6" width="12" height="2.3" rx="0.7" fill="#8a7670"/>
<ellipse cx="1564.9" cy="80.1" rx="2.9" ry="1.3" fill="#f4ece6"/>
<rect x="1479.7" y="84.5" width="130.7" height="9.8" fill="#a2938b"/>
<rect x="1507" y="93.6" width="98.9" height="23.4" fill="#b3a69d"/>
<rect x="1507" y="102.7" width="98.9" height="14.3" fill="#bdb0a6" opacity="0.7"/>
<path d="M1604.6 84.5L1611.1 84.2L1612.4 182.1L1604.6 182.1z" fill="#e2d6cd"/>
<rect x="1611.1" y="45.5" width="9.1" height="136.6" fill="#a08a78"/>
<rect x="1620.2" y="45.5" width="23.4" height="136.6" fill="#e2c8b0"/>
<path d="M1615.6 48.1L1615.9 182.1" fill="none" stroke="#c9b9a4" stroke-width="1.7" opacity="0.6"/>
<rect x="1468.9" y="88.1" width="40.7" height="11.4" fill="#4a3a3c"/>
<ellipse cx="1484.8" cy="93.6" rx="2" ry="2" fill="#8a7a78" opacity="0.7"/>
<ellipse cx="1500.4" cy="94" rx="2" ry="1.6" fill="#7a6a68" opacity="0.6"/>
<rect x="1468.5" y="88.4" width="2.6" height="93.7" fill="#e6dad2"/>
<rect x="1472.8" y="99.2" width="34.1" height="3.9" rx="0.8" fill="#f3ece6"/>
<rect x="1471.8" y="103.1" width="36.4" height="3.3" fill="#5a4a48"/>
<rect x="1472.1" y="106.3" width="34.8" height="12" fill="#efe6e0"/>
<ellipse cx="1488.7" cy="111.8" rx="1.4" ry="1.4" fill="#b8aca6"/>
<rect x="1501.7" y="107.9" width="2" height="3.6" fill="#5a4c48"/>
<rect x="1475" y="118.3" width="33.2" height="5.9" fill="#5a4c4a"/>
<rect x="1507.6" y="87.4" width="22.4" height="42.6" fill="#aa9c93"/>
<rect x="1468.9" y="112" width="40.7" height="29.9" fill="#e8dcd4"/>
<rect x="1475.7" y="118.2" width="31.9" height="4.9" fill="#5e5250"/>
<rect x="1469.2" y="123.7" width="40.3" height="2.3" fill="#f2e8e0"/>
<rect x="1470.2" y="126.3" width="24.4" height="15" fill="#4c3638"/>
<rect x="1495.9" y="126" width="13.7" height="15.9" fill="#d8ccc4"/>
<rect x="1509.5" y="112" width="20.5" height="29.9" fill="#a8988e"/>
<path d="M1513.4 133.5C1514.7 131.7 1517.8 132.2 1520.6 132.2C1523.3 132.2 1528.4 131.7 1530 133.5C1531.6 135.2 1532.9 141.1 1530 142.6C1527.1 144.1 1515.5 144.1 1512.8 142.6C1510 141.1 1512.1 135.2 1513.4 133.5z" fill="#3e2c2c"/>
<path d="M1454.2 183.5C1449.9 179.2 1453.6 163.4 1454.9 157.5C1456.2 151.7 1459.8 150.8 1462 148.4C1464.3 146 1465.5 144.4 1468.5 143.2C1471.6 142 1478.2 134.5 1480.2 141.3C1482.3 148 1485.2 176.5 1480.9 183.5C1476.6 190.6 1458.6 187.9 1454.2 183.5z" fill="#8c7c6c"/>
<path d="M1477 139.3L1480.9 139.3L1480.9 143.2L1477 143.2z" fill="#e8dcd0"/>
<path d="M1478.9 141.9C1481.5 134.8 1486 140.7 1494.6 140.6C1503.1 140.5 1523.5 134.1 1530 141.3C1536.5 148.4 1542.1 176.5 1533.6 183.5C1525.1 190.6 1488 190.5 1478.9 183.5C1469.8 176.6 1476.3 149.1 1478.9 141.9z" fill="#3c2c30"/>
<rect x="1403.5" y="177.7" width="46.8" height="5.9" fill="#e4d8d0"/>
<rect x="1572" y="121.8" width="42.3" height="48.8" fill="#dfd3c8"/>
<path d="M1574.6 114.6C1577.5 113.3 1585.5 113.2 1591.5 113.3C1597.6 113.4 1607.7 114.1 1611.1 115.3C1614.4 116.4 1617.8 119.5 1611.7 120.5C1605.6 121.4 1580.8 122.1 1574.6 121.1C1568.5 120.1 1571.8 115.9 1574.6 114.6z" fill="#6e6662"/>
<rect x="1585" y="124.4" width="27.6" height="17.2" fill="#3e3232"/>
<ellipse cx="1603.9" cy="131.5" rx="4.9" ry="4.6" fill="#c9a25a"/>
<ellipse cx="1590.6" cy="137.4" rx="3.3" ry="2.9" fill="#5a7a3a"/>
<path d="M1595.4 131.5L1600 136.7L1605.9 139.3" fill="none" stroke="#d8d0c8" stroke-width="1" opacity="0.8"/>
<rect x="1585.7" y="144.5" width="27" height="8.1" fill="#4a3e40"/>
<rect x="1600" y="148.7" width="7.2" height="1.3" fill="#8a8060"/>
<rect x="1591.5" y="153.6" width="21.1" height="15.6" fill="#6a6260"/>
<rect x="1593.5" y="155.6" width="14.3" height="3.3" fill="#e0d8d0"/>
<rect x="1591.5" y="164.7" width="20.8" height="2.6" fill="#c8c0bc"/>
<path d="M1581.1 152.3C1582.9 149.4 1593.4 148.6 1595.4 151.7C1597.5 154.7 1593.5 167 1593.5 170.5C1593.5 174.1 1597.9 172.4 1595.4 172.8C1593 173.2 1580.3 173.4 1578.5 172.8C1576.8 172.2 1584.6 172.7 1585 169.2C1585.5 165.8 1579.4 155.3 1581.1 152.3z" fill="#2c1c1e"/>
<path d="M1575.9 170.9L1630.6 169.9L1643.6 183.5L1575.9 183.5z" fill="#dcc6b6"/>
</g>
<g filter="url(#p6b)">
<path d="M1553.8 115.3C1557.9 116.2 1565.1 119.4 1569.4 122.4C1573.8 125.4 1577.3 129.6 1579.8 133.5C1582.3 137.4 1583.5 141.4 1584.4 145.8C1585.3 150.3 1585.4 156 1585 160.1C1584.7 164.2 1583.5 166.6 1582.4 170.5C1581.4 174.4 1587.9 181.4 1578.5 183.5C1569.2 185.7 1535.3 186.8 1526.5 183.5C1517.7 180.3 1526.2 169.9 1525.9 164C1525.5 158.2 1524.1 153.5 1524.6 148.4C1525 143.3 1526.5 137.8 1528.5 133.5C1530.4 129.1 1533.6 125.2 1536.3 122.4C1539 119.6 1541.8 117.7 1544.7 116.6C1547.6 115.4 1549.7 114.3 1553.8 115.3z" fill="url(#p6hair)"/>
<path d="M1539.5 119.8C1542.3 116.9 1549.7 115.8 1553.8 115.9C1557.9 116 1563.1 118.3 1564.2 120.5C1565.3 122.6 1563.1 127.3 1560.3 128.9C1557.5 130.5 1551.2 129.5 1547.3 130.2C1543.4 131 1538.2 135.2 1536.9 133.5C1535.6 131.7 1536.7 122.7 1539.5 119.8z" fill="#7e5e48" opacity="0.55"/>
<path d="M1556.4 133.5C1560.1 134 1566 135.5 1569.4 138C1572.9 140.5 1575.7 144.5 1577.2 148.4C1578.8 152.3 1578.5 157.1 1578.5 161.4C1578.5 165.8 1578.1 170.8 1577.2 174.4C1576.4 178.1 1580.4 182 1573.3 183.5C1566.3 185.1 1541.6 185.7 1535 183.5C1528.3 181.4 1533.7 175.5 1533.7 170.5C1533.7 165.6 1534 158.6 1535 153.6C1535.9 148.6 1537.5 143.8 1539.5 140.6C1541.6 137.5 1544.5 136 1547.3 134.8C1550.1 133.6 1552.7 132.9 1556.4 133.5z" fill="url(#p6face)"/>
<path d="M1545.4 158.8C1546.9 156.6 1553.2 156.4 1556.4 156.9C1559.7 157.3 1563.6 159.2 1564.9 161.4C1566.2 163.7 1565.6 168.4 1564.2 170.5C1562.8 172.7 1559.2 174.4 1556.4 174.4C1553.6 174.4 1549.2 173.1 1547.3 170.5C1545.5 167.9 1543.8 161.1 1545.4 158.8z" fill="#a88098" opacity="0.4"/>
<path d="M1535 153.6C1536.7 154.6 1541.8 158.9 1545.4 159.5C1548.9 160 1553.1 156.8 1556.4 156.9C1559.8 157 1564 159.6 1565.5 160.1" fill="none" stroke="#6a3a3c" stroke-width="0.9" opacity="0.85"/>
<path d="M1565.5 160.1C1566.8 159.7 1570.8 157.7 1573.3 157.5C1575.8 157.3 1579.3 158.6 1580.5 158.8" fill="none" stroke="#6a3a3c" stroke-width="0.8" opacity="0.7"/>
<path d="M1545.4 159.5C1545.5 161.1 1544.6 166.9 1546 169.2C1547.4 171.6 1551 173.6 1553.8 173.8C1556.6 174 1561.1 172.6 1562.9 170.5C1564.8 168.5 1564.6 162.9 1564.9 161.4" fill="none" stroke="#8a5a64" stroke-width="0.6" opacity="0.7"/>
<path d="M1580.5 156.2C1581.6 153.8 1584.4 155.6 1585 157.5C1585.7 159.5 1585.5 165.6 1584.4 167.9C1583.3 170.3 1579.2 173.8 1578.5 171.8C1577.9 169.9 1579.4 158.6 1580.5 156.2z" fill="#e0c8c0" opacity="0.8"/>
<path d="M1547.3 153.6C1548.6 153.2 1552.7 151.1 1555.1 151C1557.5 150.9 1560.5 152.7 1561.6 153" fill="none" stroke="#7a4448" stroke-width="1.2" opacity="0.75"/>
<path d="M1568.1 153.6C1569 153.3 1571.8 151.7 1573.3 151.7C1574.9 151.7 1576.6 153.3 1577.2 153.6" fill="none" stroke="#7a4448" stroke-width="1" opacity="0.7"/>
<ellipse cx="1553.8" cy="156.9" rx="5.2" ry="1.4" fill="#7a4a58" opacity="0.7"/>
<ellipse cx="1572" cy="157.5" rx="3.6" ry="1.3" fill="#7a4a58" opacity="0.7"/>
<path d="M1552.5 171.5L1559 170.5" fill="none" stroke="#f0d4d0" stroke-width="1.2" opacity="0.8"/>
</g></svg>
<div class="tag" style="left:3.2px;width:119.400px"><svg><use href="#mute"/></svg></div>
<div class="t" style="left:23.80px;top:109.23px;height:15px;line-height:15px;font-family:'Liberation Sans','DejaVu Sans',sans-serif;font-size:11.6px;letter-spacing:0.09px;color:#f0f0f0;">Анна Ичетовкина</div>
</div>
<div id="slide">
<svg class="deco" viewBox="190 169.500 1539.500 876.500"><defs><pattern id="hatch" width="9" height="40" patternUnits="userSpaceOnUse" patternTransform="rotate(27) skewY(0)"><rect width="9" height="40" fill="#cfcfd0"/><rect x="0" width="1.1" height="40" fill="#b4b4b6"/><rect x="1.9" width=".9" height="40" fill="#e9e9ea"/><rect x="3.4" width="1.3" height="40" fill="#bdbdbf"/><rect x="5.300" width=".8" height="40" fill="#f0f0f1"/><rect x="6.600" width="1" height="40" fill="#c4c4c6"/><rect x="8" width=".6" height="40" fill="#e2e2e4"/></pattern><pattern id="hatch2" width="23" height="60" patternUnits="userSpaceOnUse" patternTransform="rotate(31)"><rect x="2" width="2.500" height="60" fill="#a9a9ab" opacity=".55"/><rect x="9" width="2.500" height="60" fill="#f4f4f5" opacity=".5"/><rect x="15" width="2" height="60" fill="#b0b0b2" opacity=".5"/><rect x="19.500" width="1.500" height="60" fill="#fff" opacity=".5"/></pattern><filter id="db1" x="-10%" y="-10%" width="120%" height="120%"><feGaussianBlur stdDeviation=".8"/></filter><filter id="db2" x="-10%" y="-10%" width="120%" height="120%"><feGaussianBlur stdDeviation="1"/></filter><filter id="rough" x="-5%" y="-5%" width="110%" height="110%"><feTurbulence type="fractalNoise" baseFrequency=".22" numOctaves="2" seed="4" result="n"/><feDisplacementMap in="SourceGraphic" in2="n" scale="2.600" xChannelSelector="R" yChannelSelector="G"/><feGaussianBlur stdDeviation=".8"/></filter><filter id="rough2" x="-5%" y="-5%" width="110%" height="110%"><feTurbulence type="fractalNoise" baseFrequency=".12" numOctaves="2" seed="7" result="n"/><feDisplacementMap in="SourceGraphic" in2="n" scale="7" xChannelSelector="R" yChannelSelector="G"/></filter><pattern id="hatch3" width="61" height="90" patternUnits="userSpaceOnUse" patternTransform="rotate(24)"><rect x="5" width="6" height="90" fill="#9f9fa1" opacity=".35"/><rect x="24" width="7" height="90" fill="#f4f4f4" opacity=".3"/><rect x="44" width="5" height="90" fill="#a6a6a8" opacity=".3"/></pattern><filter id="db8" x="-50%" y="-50%" width="200%" height="200%"><feGaussianBlur stdDeviation="9"/></filter><filter id="stone" color-interpolation-filters="sRGB" x="-5%" y="-5%" width="110%" height="110%"><feTurbulence type="fractalNoise" baseFrequency=".11" numOctaves="2" seed="5" result="n"/><feColorMatrix in="n" type="matrix" values=".34 0 0 0 .62  .34 0 0 0 .62  .34 0 0 0 .62  0 0 0 0 1" result="g"/><feComposite in="g" in2="SourceGraphic" operator="in"/></filter></defs>
<path d="M192 171.5L351 171.5L358.5 181.5C366 190 376 208 379.500 222C383 238 380 250 374 262L359.500 294.500L339 343.600L318.600 396.800L306.300 421L285.900 466L267.500 502.700L247 539.500L226.600 570.200L212.300 588.600L202 601L192 613z" fill="#eae3e2" filter="url(#db1)"/>
<g >
<path d="M215.3 181.6C214.5 183.1 212.4 187.4 210.2 190.2C208.1 193.1 203.7 197.4 202.5 198.8" fill="none" stroke="#b7b0ae" stroke-width="1.6" opacity="1"/>
<path d="M246 181.6C243.5 188.2 235.3 208.2 230.7 220.9C226.1 233.6 222 246.1 218.4 257.7C214.8 269.3 211.8 281.2 209.2 290.4C206.6 299.6 203.9 309.2 202.9 312.9" fill="none" stroke="#b7b0ae" stroke-width="1.6" opacity="1"/>
<path d="M271.6 181.6C268.8 188.2 260 208.9 255.2 220.9C250.4 232.9 246 242.7 242.9 253.6C239.9 264.5 238.2 276.5 236.8 286.3C235.4 296.2 234.7 302.7 234.8 312.9C234.8 323.1 235.7 337.1 237.2 347.7C238.8 358.3 241.2 367.8 244 376.3C246.7 384.8 249.7 393.6 253.6 398.8C257.5 404 263 407.3 267.5 407.6C272 407.9 276.7 405.2 280.8 400.9C284.9 396.5 288.4 388.9 292 381.4C295.6 373.9 298.5 366.3 302.2 355.9C306 345.5 310.4 333 314.5 319.1C318.6 305.1 323 288.4 326.8 272C330.5 255.7 334.5 236 337 220.9C339.6 205.8 341.3 188.2 342.1 181.6" fill="none" stroke="#b7b0ae" stroke-width="1.6" opacity="1"/>
<path d="M290 181.6C287.3 188.2 278.1 208.2 273.6 220.9C269.2 233.6 266.1 245.8 263.4 257.7C260.7 269.6 258.6 282.2 257.3 292.5C255.9 302.7 254.9 309.9 255.2 319.1C255.5 328.3 256.9 338.5 258.9 347.7C260.9 356.9 264.2 366.6 267.5 374.3C270.8 381.9 274.6 389.3 278.7 393.7C282.8 398.1 287.8 400.3 292 400.4C296.3 400.6 300.2 398.3 304.3 394.3C308.4 390.3 312.1 385.5 316.6 376.3C321 367.2 326.3 354.5 330.9 339.5C335.5 324.5 340.4 304.4 344.2 286.3C347.9 268.3 351 248 353.4 231.1C355.8 214.3 357.6 192.8 358.5 185.1" fill="none" stroke="#b7b0ae" stroke-width="1.6" opacity="1"/>
<path d="M324.7 181.6C324.1 186.5 323 200.7 320.7 210.7C318.3 220.6 315 231.3 310.4 241.3C305.8 251.4 299.5 262.8 293 271C286.6 279.2 277.5 286 271.6 290.4C265.6 294.9 263.4 295.4 257.3 297.6C251.1 299.8 241.6 301.8 234.8 303.7C227.9 305.6 221.7 307 216.4 308.8C211 310.7 205.1 313.9 202.9 315" fill="none" stroke="#b7b0ae" stroke-width="1.6" opacity="1"/>
<path d="M202.9 432.1C204.3 430.1 206.6 422.7 211.2 419.9C215.9 417 224.4 414.7 230.7 415.2C237 415.7 244.5 418.6 249.1 422.9C253.7 427.3 256.9 434.9 258.3 441.3C259.7 447.8 259.2 455 257.7 461.8C256.1 468.6 253.6 475.8 249.1 482.2C244.6 488.7 236.8 495.2 230.7 500.7C224.5 506.1 216.9 511.6 212.3 515C207.6 518.4 204.4 520.1 202.9 521.1" fill="none" stroke="#b7b0ae" stroke-width="1.6" opacity="1"/>
<path d="M203.3 431.1C204.1 435.6 205.7 448.5 208.2 457.7C210.7 466.9 214.7 478.2 218.4 486.3C222.2 494.5 225.6 499 230.7 506.8C235.8 514.6 246 528.6 249.1 533" fill="none" stroke="#b7b0ae" stroke-width="1.6" opacity="1"/>
</g>
<path d="M217.5 582.7C219.2 583.8 222.7 586.1 227.8 589.3C232.9 592.6 242.5 597.6 248.3 602C254.2 606.5 258.4 611.4 262.8 615.9C267.3 620.5 271.3 624.8 274.9 629.2C278.5 633.6 281.8 637.9 284.6 642.5C287.4 647.1 289.4 652.4 291.8 657C294.3 661.6 296.7 664.9 299.1 670.3C301.5 675.7 305.1 686.4 306.3 689.6" fill="none" stroke="#8a8a8c" stroke-width="0.8"/>
<g filter="url(#db1)">
<path d="M227.2 589C229.1 590 235.1 593.2 238.7 595.4C242.2 597.6 245.3 599.6 248.3 602C251.4 604.4 255.4 608.6 256.8 609.9" fill="none" stroke="#7a7a7c" stroke-width="2.6" stroke-linecap="round"/>
<path d="M256.8 609.9C258.2 611.3 262.4 615.4 265.3 618.3C268.1 621.3 272.3 626.2 273.7 627.8" fill="none" stroke="#7a7a7c" stroke-width="2.6" stroke-linecap="round"/>
<path d="M277.3 632.8C278.3 634.2 281.6 638.5 283.4 641.3C285.2 644.1 287.4 648.3 288.2 649.8" fill="none" stroke="#7a7a7c" stroke-width="2.6" stroke-linecap="round"/>
<path d="M298.1 668.5C298.9 670.2 301.4 675.5 302.7 678.8C304 682 305.5 686.3 306.1 687.8" fill="none" stroke="#7a7a7c" stroke-width="2.6" stroke-linecap="round"/>
</g>
<g filter="url(#db1)">
<path d="M335.400 945C343 943.500 350 944.500 356 946L434.400 981.400L512.500 1015L585 1046L326 1046C318 1026 313.500 1016 314.600 1007.400C313.500 1002 318 998 316 994.400C320 988 322 984 325 981C326 972 328 964 330 958C331 952 333 947 335.400 945z" fill="#dde0df"/>
<path d="M341.7 771.5C342.4 771.5 344 776.7 345 779.5C346.1 782.4 347.1 785.6 347.9 788.6C348.7 791.7 349.3 794.4 350 797.7C350.7 801 352 806.2 352.1 808.4C352.1 810.6 351.6 810.9 350.5 810.8C349.4 810.6 346.8 808.9 345.3 807.5C343.8 806.1 342.4 805.2 341.7 802.3C340.9 799.4 341.2 793.7 341 789.9C340.8 786.1 340.6 782.6 340.7 779.5C340.8 776.4 340.9 771.5 341.7 771.5z" fill="#757577"/>
<path d="M339 765.2L341.4 772.4" fill="none" stroke="#9a9a9c" stroke-width="0.7"/>
<path d="M351 810.1C351.3 813.7 352.2 824.8 352.7 831.6C353.2 838.4 353.7 843.5 354 851.1C354.3 858.7 354.4 869 354.7 877.1C354.9 885.3 355.2 901.3 355.3 900C355.4 898.8 355.1 866.7 355.2 869.4C355.3 872.1 355.7 901.5 355.7 916.2C355.7 931 355.8 947.5 355.2 957.9C354.6 968.3 353.9 972.2 352.3 978.8C350.8 985.3 348.7 990.9 345.8 997C343 1003.1 338.5 1010.4 335.4 1015.2C332.4 1020 330.1 1022.5 327.6 1025.6C325.1 1028.8 321.5 1032.6 320.3 1034" fill="none" stroke="#8d8d8f" stroke-width="1"/>
<path d="M351.5 823.1C351.7 823.9 352.2 826.1 352.5 827.7C352.7 829.3 352.9 832 353 832.9" fill="none" stroke="#78787a" stroke-width="2.6" stroke-linecap="round"/>
<path d="M352.8 838.1C353 839 353.4 841.5 353.6 843.3C353.8 845.1 354 848.2 354 849.2" fill="none" stroke="#78787a" stroke-width="2.6" stroke-linecap="round"/>
<path d="M354.7 865.4C354.7 866.1 354.8 868.7 354.8 869.3" fill="none" stroke="#78787a" stroke-width="2.6" stroke-linecap="round"/>
<path d="M354.9 890.2C355 891.2 355.1 895 355.2 896.7C355.3 898.3 355.3 899.5 355.3 900" fill="none" stroke="#78787a" stroke-width="2.6" stroke-linecap="round"/>
<path d="M354.4 895.4C354.6 897.2 355 901.9 355.2 905.8C355.4 909.7 355.4 916.7 355.5 918.9" fill="none" stroke="#7c7c7e" stroke-width="2.4" stroke-linecap="round"/>
<path d="M355.5 942.3C355.4 945.8 355.5 957.5 355.2 963.1C354.9 968.8 353.9 974 353.6 976.1" fill="none" stroke="#7c7c7e" stroke-width="2.4" stroke-linecap="round"/>
<path d="M349.7 989.2C348.9 991.1 346.7 996.8 344.5 1000.9C342.4 1005 338 1011.7 336.7 1013.9" fill="none" stroke="#7c7c7e" stroke-width="2.4" stroke-linecap="round"/>
<path d="M331.5 1020.4C330.4 1021.9 326.1 1028 325 1029.5" fill="none" stroke="#7c7c7e" stroke-width="2.4" stroke-linecap="round"/>
<path d="M416.1 1008.7L405.7 1034" fill="none" stroke="#9c9c9e" stroke-width="1.1"/>
<path d="M443.5 1016.5L435.7 1034" fill="none" stroke="#9c9c9e" stroke-width="1.1"/>
<path d="M460.4 1029.5L458.9 1034" fill="none" stroke="#9c9c9e" stroke-width="1.1"/>
</g>
<g filter="url(#stone)">
<path d="M930.3 172.8C925.7 175.6 930.4 183.1 930.6 186.9C930.8 190.6 930.3 193.2 931.4 195.3C932.6 197.4 934.5 198.2 937.6 199.5C940.7 200.8 945.3 202 950 203.2C954.7 204.4 960.7 206.9 965.7 206.8C970.8 206.7 977 204.5 980.4 202.6C983.8 200.7 984.8 198.4 986.3 195.3C987.8 192.2 988.8 187.8 989.4 184.1C990 180.3 995.1 175.2 989.9 172.8C984.8 170.5 968.4 170 958.4 170C948.5 170 935 170 930.3 172.8z" fill="#c8c8c9"/>
</g>
<path d="M1180.600 181.500L1400 181.500L1400 187L1282 226L1172 241L1174 212z" fill="#eeeeed" filter="url(#db2)"/>
<g filter="url(#rough)">
<path d="M1180.6 184.1C1192.8 184 1220.9 183.9 1253.7 183.5C1286.6 183.1 1356.9 182.1 1377.5 181.8" fill="none" stroke="#a9a9aa" stroke-width="5" stroke-linecap="round"/>
<path d="M1182 198.7C1189.3 198.2 1209 197.3 1225.6 195.9C1242.3 194.5 1263.6 192.1 1281.9 190.2C1300.2 188.4 1326.4 185.6 1335.3 184.6" fill="none" stroke="#a9a9aa" stroke-width="5" stroke-linecap="round"/>
<path d="M1176.4 217C1184.6 215.7 1208 212.1 1225.6 209.7C1243.2 207.2 1264.4 204.6 1281.9 202.3C1299.3 200.1 1322.2 197.2 1330.2 196.2" fill="none" stroke="#a9a9aa" stroke-width="5" stroke-linecap="round"/>
<path d="M1171.6 233.6C1178.3 232.2 1197.9 227.9 1211.6 225.1C1225.2 222.3 1243.8 218.6 1253.7 216.7C1263.7 214.8 1268.3 214.1 1271.2 213.6" fill="none" stroke="#a9a9aa" stroke-width="5" stroke-linecap="round"/>
</g>
<mask id="hm" maskUnits="userSpaceOnUse" x="1530" y="260" width="200" height="510"><path d="M1719.3 271.5L1703.9 273.4L1692.8 276.2L1678.8 283.2L1662.1 295.7L1645.4 302.7L1617.5 311L1606.3 319.4L1592.4 332L1578.4 336.1L1567.3 344.5L1550.6 348.7L1543.6 354.3L1542.2 361.2L1550.6 378L1558.9 389.1L1565.9 403.1L1571.5 425.4L1578.4 453.2L1580.6 463L1584.4 504.6L1590.4 549.2L1596.3 584.9L1602.3 632.5L1605.3 668.2L1614.2 706.9L1620.1 742.6L1620.7 755.1L1638 753L1667.7 744.1L1697.5 739.6L1718.3 735.2z" fill="#fff" filter="url(#rough2)"/></mask>
<g mask="url(#hm)"><rect x="1530" y="260" width="200" height="510" fill="url(#hatch)"/><rect x="1530" y="260" width="200" height="510" fill="url(#hatch2)"/><rect x="1530" y="260" width="200" height="510" fill="url(#hatch3)"/><g filter="url(#db8)" style="mix-blend-mode:multiply"><ellipse cx="1585" cy="350" rx="38" ry="48" fill="#e2e2e2" transform="rotate(25 1585 350)"/><ellipse cx="1625" cy="530" rx="30" ry="70" fill="#e4e4e4" transform="rotate(20 1625 530)"/><ellipse cx="1640" cy="700" rx="30" ry="50" fill="#e8e8e8"/></g><g filter="url(#db8)" style="mix-blend-mode:screen"><ellipse cx="1675" cy="330" rx="28" ry="50" fill="#202020" transform="rotate(25 1675 330)"/><ellipse cx="1690" cy="590" rx="26" ry="80" fill="#1e1e1e" transform="rotate(15 1690 590)"/><ellipse cx="1655" cy="450" rx="22" ry="40" fill="#181818"/></g></g>
<g filter="url(#db2)">
<path d="M1291.9 1036.2C1270 1034.7 1304.7 1029.1 1312.5 1027.2C1320.3 1025.4 1329.4 1024.7 1338.7 1025C1348.1 1025.3 1356.9 1028.1 1368.7 1029.1C1380.6 1030.2 1397.5 1030.2 1410 1031.4C1422.5 1032.6 1463.4 1035.4 1443.7 1036.2C1424.1 1037.1 1313.7 1037.7 1291.9 1036.2z" fill="#8b8b8d"/>
<path d="M1679.2 1038.5C1676 1037 1682.7 1031.6 1685.2 1029.5C1687.7 1027.4 1691.5 1026.3 1694.2 1026.1C1697 1025.9 1700 1026.3 1701.7 1028.4C1703.5 1030.4 1708.5 1036.8 1704.7 1038.5C1701 1040.2 1682.5 1040 1679.2 1038.5z" fill="#7d7d7f"/>
</g></svg>
<div id="titlebox"></div>
<div class="t" style="left:117.20px;top:356.43px;height:80px;line-height:80px;font-family:'Liberation Serif','DejaVu Serif',serif;font-size:72.5px;letter-spacing:2.2px;color:#060507;-webkit-text-stroke:.45px #060507;">Психологические</div>
<div class="t" style="left:705.30px;top:356.43px;height:80px;line-height:80px;font-family:'Liberation Serif','DejaVu Serif',serif;font-size:72.5px;letter-spacing:1.35px;color:#060507;-webkit-text-stroke:.45px #060507;">особенности</div>
<div class="t" style="left:115.10px;top:430.63px;height:80px;line-height:80px;font-family:'Liberation Serif','DejaVu Serif',serif;font-size:72.5px;letter-spacing:3.1px;color:#060507;-webkit-text-stroke:.45px #060507;">общения</div>
<div class="t" style="left:425.50px;top:430.63px;height:80px;line-height:80px;font-family:'Liberation Serif','DejaVu Serif',serif;font-size:72.5px;color:#060507;-webkit-text-stroke:.45px #060507;">в</div>
<div class="t" style="left:478.00px;top:430.63px;height:80px;line-height:80px;font-family:'Liberation Serif','DejaVu Serif',serif;font-size:72.5px;letter-spacing:2.59px;color:#060507;-webkit-text-stroke:.45px #060507;">Интернете</div>
</div>
<div id="sep"></div>
<div id="taskbar">
<svg id="tbicons" viewBox="0 1035.200 1920 41" width="1920" height="41" style="position:absolute;left:0;top:0">
<defs>
<linearGradient id="gWin" x1="0" y1="0" x2="1" y2="1"><stop offset="0" stop-color="#49c0f8"/><stop offset=".5" stop-color="#1c93e6"/><stop offset="1" stop-color="#0a6fd2"/></linearGradient>
<linearGradient id="gFold" x1="0" y1="0" x2="0" y2="1"><stop offset="0" stop-color="#ffd75a"/><stop offset="1" stop-color="#f2b42c"/></linearGradient>
<radialGradient id="gFox" cx=".55" cy=".35" r=".75"><stop offset="0" stop-color="#ffd43a"/><stop offset=".45" stop-color="#ff8a1e"/><stop offset="1" stop-color="#f0363f"/></radialGradient>
<linearGradient id="gPaint" x1="0" y1="0" x2="1" y2="1"><stop offset="0" stop-color="#4fc4ee"/><stop offset="1" stop-color="#1a8ad6"/></linearGradient>
<filter id="b05"><feGaussianBlur stdDeviation=".45"/></filter>
<filter id="b03"><feGaussianBlur stdDeviation=".8"/></filter>
</defs>
<!-- start button -->
<g fill="url(#gWin)"><rect x="720" y="1047.4" width="10.4" height="10.4" rx=".6"/><rect x="731.4" y="1047.4" width="10.4" height="10.4" rx=".6"/><rect x="720" y="1058.8" width="10.4" height="10.4" rx=".6"/><rect x="731.4" y="1058.8" width="10.4" height="10.4" rx=".6"/></g>
<!-- search pill -->
<rect x="755.3" y="1044.300" width="203.6" height="28.500" rx="14.250" fill="#d9cfe0"/><rect x="755.3" y="1043.800" width="203.6" height="28.400" rx="14.200" fill="#fbf8fd"/>
<g fill="none" stroke="#2b2b2f" stroke-width="1.7" stroke-linecap="round"><circle cx="771.6" cy="1057.2" r="4.9"/><path d="M775.2 1060.9l3.6 3.6"/></g>
<!-- squirrel with berries -->
<g>
<path d="M911.2 1054.3C915.6 1057.7 920.8 1062.4 925.0 1065.5S932.3 1070.2 936.5 1070.5" stroke="#85776a" stroke-width="1.4" fill="none" stroke-linecap="round"/>
<path d="M915.1 1054.8C914.6 1051.5 916.7 1048.9 919.5 1047.8C920.3 1050.9 918.8 1054.1 915.1 1054.8z" fill="#3f8c7b"/>
<path d="M919.5 1054.3C920.8 1054.6 922.4 1056.1 922.1 1058.2C920.6 1058.0 919.4 1056.4 919.5 1054.3z" fill="#6fab9a"/>
<circle cx="913.8" cy="1062.9" r="2.19" fill="#cf2a3b"/>
<circle cx="913.4" cy="1063.5" r="0.66" fill="#fff" opacity=".75"/>
<circle cx="920.8" cy="1068.1" r="1.98" fill="#d22c3c"/>
<circle cx="920.4" cy="1068.8" r="0.59" fill="#fff" opacity=".75"/>
<circle cx="925.0" cy="1059.0" r="2.19" fill="#cc2436"/>
<circle cx="924.6" cy="1059.6" r="0.66" fill="#fff" opacity=".75"/>
<circle cx="928.8" cy="1055.2" r="1.98" fill="#d42c3e"/>
<circle cx="928.3" cy="1055.8" r="0.59" fill="#fff" opacity=".75"/>
<circle cx="930.5" cy="1060.2" r="1.88" fill="#c4202f"/>
<circle cx="930.1" cy="1060.8" r="0.56" fill="#fff" opacity=".75"/>
<path d="M949.2 1048.3C952.6 1047.8 956.0 1053.5 956.1 1060.3C955.7 1064.5 952.1 1067.1 948.4 1066.0C950.0 1062.4 948.4 1057.2 947.7 1053.0C947.4 1050.4 947.9 1048.9 949.2 1048.3z" fill="#c9782c"/>
<path d="M936.5 1057.2C940.6 1055.6 945.8 1057.2 948.4 1061.9C950.0 1065.5 947.9 1069.2 943.8 1069.7L940.1 1069.4C941.7 1067.1 941.1 1064.5 938.5 1062.9C935.9 1061.9 933.3 1061.9 932.3 1060.3C933.3 1058.8 934.9 1058.0 936.5 1057.2z" fill="#d98d42"/>
<path d="M932.6 1055.6C932.0 1053.0 933.9 1050.4 937.0 1050.2L939.6 1048.3L941.7 1049.9C941.7 1052.0 941.1 1055.6 939.6 1057.7C937.0 1058.8 933.9 1058.2 932.6 1055.6z" fill="#de9448"/>
<path d="M938.8 1049.1L941.4 1048.8L941.1 1050.4z" fill="#8f7668"/>
<circle cx="935.5" cy="1051.9" r="0.52" fill="#3a2416"/>
<path d="M940.6 1068.4C941.7 1069.2 944.3 1069.7 945.8 1069.2" stroke="#b86a24" stroke-width=".8" fill="none"/>
</g>
<!-- file explorer -->
<g>
<path d="M972.200 1050.300a1.600 1.600 0 0 1 1.600-1.600h5.400c.7 0 1.300.3 1.700.8l1.300 1.500h11.400a1.600 1.600 0 0 1 1.600 1.600v14.600a1.600 1.600 0 0 1 -1.600 1.600h-19.800a1.600 1.600 0 0 1 -1.600-1.600z" fill="#e9a820"/>
<rect x="972.200" y="1051.800" width="23" height="17" rx="1.600" fill="url(#gFold)"/>
<path d="M976.300 1068.800v-3.700a2 2 0 0 1 2-2h10.800a2 2 0 0 1 2 2v3.700z" fill="#1b7fcf"/>
<rect x="978.600" y="1064.600" width="10.200" height="1.500" rx=".7" fill="#4db3ee"/>
</g>
<!-- firefox -->
<g>
<circle cx="1024.300" cy="1058.200" r="10.500" fill="url(#gFox)"/>
<path d="M1027 1045.800c1 1.800 1.200 3.400.8 5c2.600 1.300 4.800 3.700 5.800 6.800c.6-4.800-2.300-9.600-6.600-11.800z" fill="#ffe24f"/>
<path d="M1014.600 1052.600c.8-2.400 2.600-4.500 4.900-5.600c-.3 1.500-.1 2.900.6 4.100c-2.100-.1-4 .5-5.500 1.500z" fill="#ff8a1f"/>
<circle cx="1024.800" cy="1058.600" r="5.600" fill="#7a3bc8"/>
<circle cx="1025.600" cy="1057.600" r="3.200" fill="#9a52e6"/>
<path d="M1017.600 1056.200c1.700-2.700 5.400-3.500 8.300-2.100c-1.700 .5-2.600 1.700-2.500 3.100c.2 1.800 2.100 2.800 4.100 2.300c-1.200 3-5.200 4.400-8.200 2.600c-2.100-1.200-2.800-3.700-1.700-5.900z" fill="#ff9d2b"/>
<path d="M1014 1060.500c1.200 4.800 5.400 8.200 10.400 8.200c4.300 0 8-2.500 9.700-6.200c-2.600 3.200-6.700 4.700-10.700 3.800c-4-.8-7.400-3-9.400-5.800z" fill="#f0324a" opacity=".85"/>
</g>
<!-- chrome -->
<g>
<circle cx="1065.700" cy="1058" r="11.300" fill="#fff"/>
<path d="M1065.700 1058L1055.910 1052.350A11.300 11.300 0 0 1 1075.490 1052.350z" fill="#e33b2e"/>
<path d="M1065.700 1058L1075.490 1052.350A11.300 11.300 0 0 1 1065.700 1069.300z" fill="#fbc116"/>
<path d="M1065.700 1058L1065.700 1069.300A11.300 11.300 0 0 1 1055.910 1052.350z" fill="#2da94f"/>
<path d="M1055.910 1052.350A11.300 11.300 0 0 1 1075.490 1052.350L1065.700 1052.350z" fill="#e33b2e"/>
<circle cx="1065.700" cy="1058" r="5.300" fill="#fff"/>
<circle cx="1065.700" cy="1058" r="4.200" fill="#3f86f0"/>
</g>
<!-- paint -->
<g>
<path d="M1107.200 1046.800c6.300 0 11 4.300 11 9.600c0 3-1.300 4.300-3.400 4.800c-1.800 .4-2.300 1.300-2 3c.5 3-1.300 5.300-5.300 5.300c-6.300 0-11.300-5-11.300-11.200c0-6.400 4.800-11.500 11-11.500z" fill="url(#gPaint)"/>
<circle cx="1101.600" cy="1054" r="1.900" fill="#4caf50"/><circle cx="1106.500" cy="1050.300" r="1.800" fill="#f4c531"/><circle cx="1100.500" cy="1059.800" r="1.900" fill="#d84b3a"/><circle cx="1107.500" cy="1060" r="1.300" fill="#fff"/>
<path d="M1112.400 1051.500l1.500 6h-3z" fill="#e9dccb"/><rect x="1111.200" y="1056.800" width="2.500" height="2" fill="#9aa0a6"/><rect x="1111.700" y="1058.800" width="1.700" height="9.800" rx=".8" fill="#b8762e"/>
</g>
<!-- word -->
<g>
<rect x="1137.200" y="1046.900" width="20.600" height="20.800" rx=".8" fill="#dfe6f3" stroke="#8ea6d0" stroke-width=".7"/>
<rect x="1137.600" y="1047.300" width="19.800" height="9.500" fill="#c3d2ec"/>
<path d="M1145 1059l12.600-2.600v10.900h-12.600z" fill="#fdfdfe"/>
<path d="M1147 1061.600l9-1.400M1147 1063.800l9-1.200M1147 1066l9-.9" stroke="#b9c0cc" stroke-width=".7" fill="none"/>
</g>
<text x="1137.900" y="1062.600" font-family="'Liberation Sans','DejaVu Sans',sans-serif" font-weight="700" font-size="17.500" fill="#1c4ea4" textLength="16.500" lengthAdjust="spacingAndGlyphs">W</text>
<!-- zoom (active) -->
<rect x="1171.400" y="1040" width="35.800" height="36.500" rx="4" fill="#f6ebe8" stroke="#efe3df" stroke-width=".8"/>
<rect x="1177.900" y="1046.600" width="23.200" height="23.200" rx="9.800" fill="#0b5cff"/>
<text x="1189.500" y="1060.100" text-anchor="middle" font-family="'Liberation Sans','DejaVu Sans',sans-serif" font-weight="700" font-size="6.200" fill="#fff">zoom</text>
<!-- running indicators -->
<g fill="#8d8b92"><rect x="980.300" y="1073.300" width="6" height="3" rx="1.500"/><rect x="1021.300" y="1073.300" width="6" height="3" rx="1.500"/><rect x="1103.300" y="1073.300" width="6" height="3" rx="1.500"/><rect x="1144.300" y="1073.300" width="6" height="3" rx="1.500"/></g>
<rect x="1181.600" y="1073.300" width="15.600" height="3" rx="1.500" fill="#1a66d6"/>
<!-- tray -->
<path d="M1697 1060.500l5-5l5 5" fill="none" stroke="#2a2c30" stroke-width="1.500" stroke-linecap="round" stroke-linejoin="round"/>
<g fill="none" stroke="#2f6fd0" stroke-width="1.300" stroke-linecap="round"><rect x="1729.300" y="1050.800" width="5.200" height="9.200" rx="2.600"/><path d="M1726.800 1057.500a5.100 5.100 0 0 0 10.200 0M1731.900 1062.700v2.300"/></g>
<g fill="none" stroke="#3a3c40" stroke-width="1.200" stroke-linejoin="round" stroke-linecap="round">
<path d="M1805.500 1052.200h-8.600a1.400 1.400 0 0 0 -1.400 1.400v7.400a1.400 1.400 0 0 0 1.400 1.400h9.500v-4"/>
<path d="M1799.500 1065h7M1802.500 1062.600v2.200"/>
<rect x="1806.600" y="1050.600" width="3.800" height="6" rx="1.800"/><path d="M1808.500 1056.600v8.400"/>
<path d="M1818.400 1056.200h2.200l3.200-2.600v9.400l-3.200-2.600h-2.200z"/>
<path d="M1826 1055.800a3.300 3.300 0 0 1 0 5M1828 1054a5.800 5.800 0 0 1 0 8.600"/>
</g>
<path d="M1830.200 1052.600a8 8 0 0 1 0 11.400" fill="none" stroke="#9ea3a8" stroke-width="1"/>
</svg>
<div class="t" style="left:788.60px;top:14.25px;height:18px;line-height:18px;font-family:'Liberation Sans','DejaVu Sans',sans-serif;font-size:14px;letter-spacing:-0.35px;color:#6a686e;">Поиск</div>
<div class="t" style="left:1757.20px;top:16.39px;height:14px;line-height:14px;font-family:'Liberation Sans','DejaVu Sans',sans-serif;font-size:10.7px;letter-spacing:-0.2px;color:#33353a;">РУС</div>
<div class="t" style="left:1875.80px;top:7.72px;height:15px;line-height:15px;font-family:'Liberation Sans','DejaVu Sans',sans-serif;font-size:11.2px;letter-spacing:-0.3px;color:#33353a;">18:50</div>
<div class="t" style="left:1848.40px;top:22.72px;height:15px;line-height:15px;font-family:'Liberation Sans','DejaVu Sans',sans-serif;font-size:11.2px;letter-spacing:-0.2px;color:#33353a;">21.01.2026</div>
</div>

</body>
</html>
